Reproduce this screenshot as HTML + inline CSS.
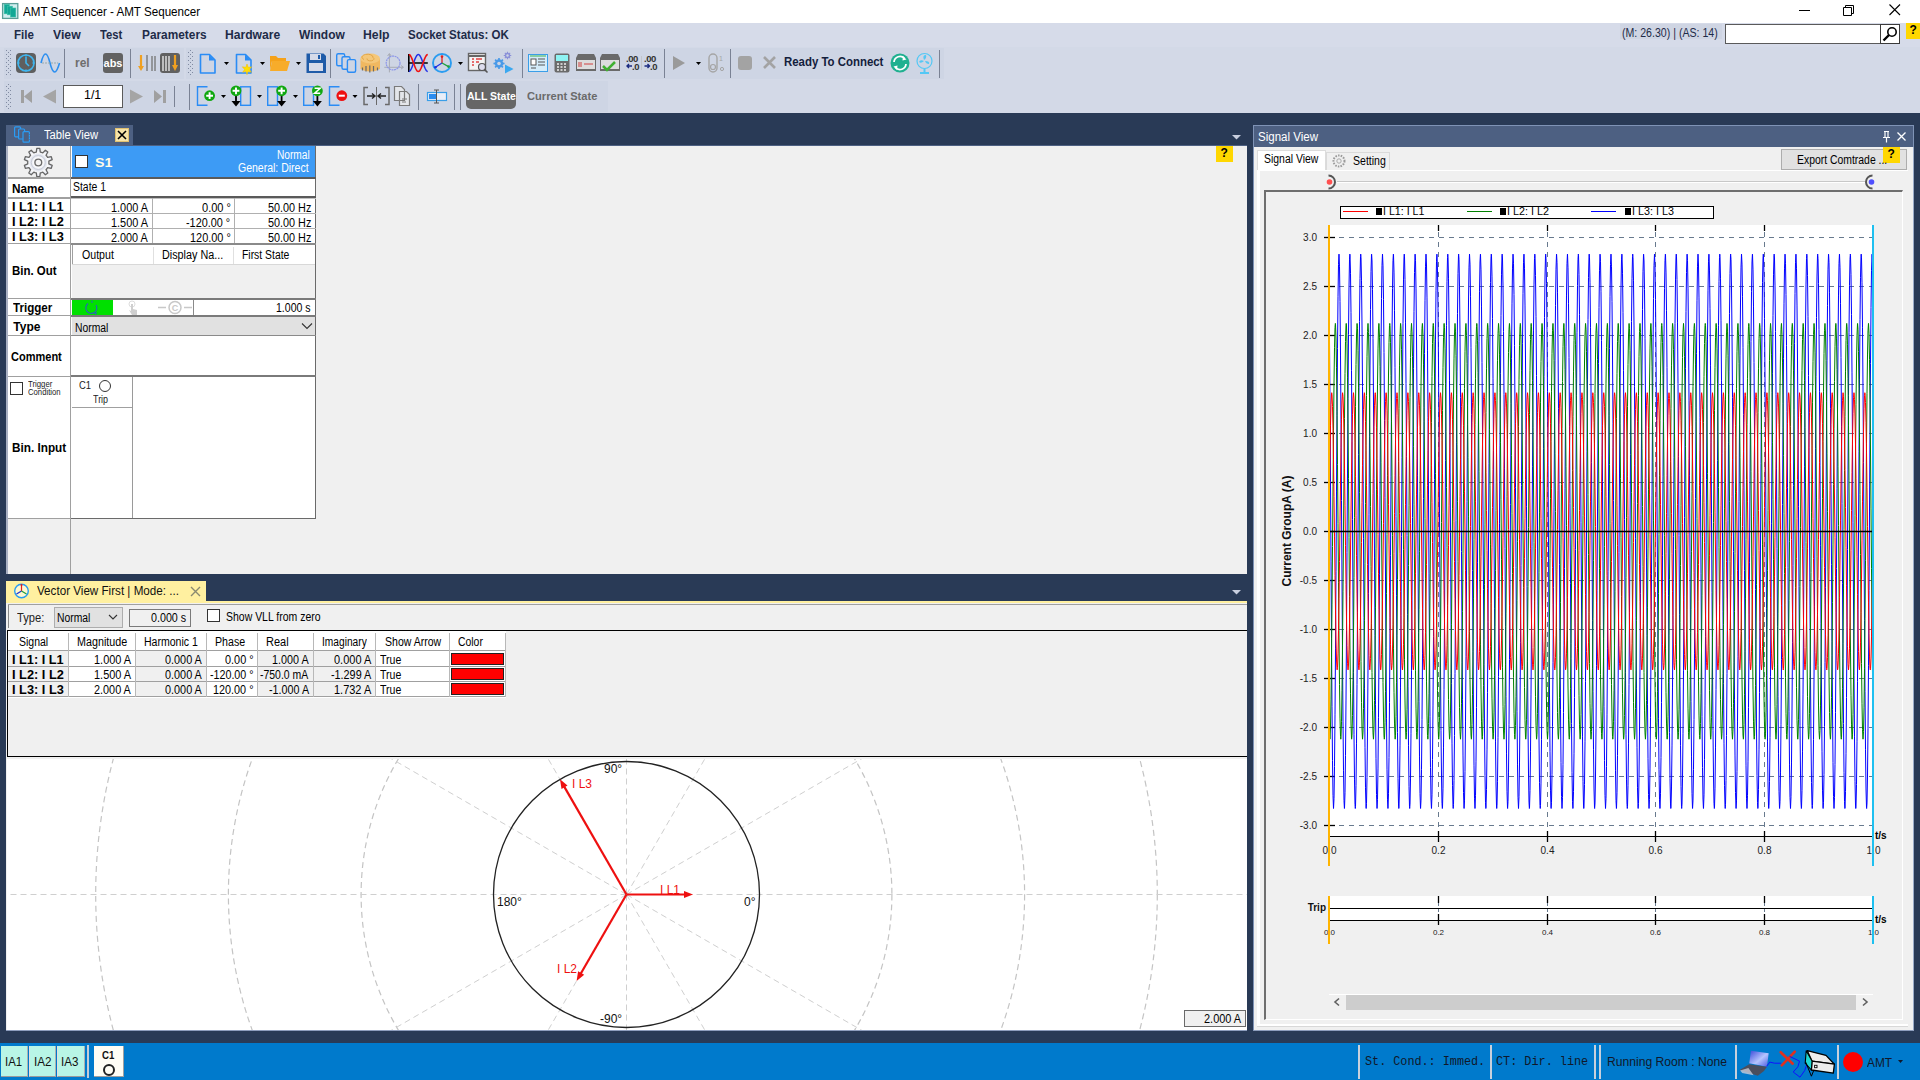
<!DOCTYPE html>
<html><head><meta charset="utf-8"><title>AMT Sequencer</title>
<style>
*{box-sizing:border-box;margin:0;padding:0}
html,body{width:1920px;height:1080px;overflow:hidden;background:#293a56;font-family:"Liberation Sans",sans-serif;font-size:12px;color:#000}
.a{position:absolute}
.t{position:absolute;white-space:nowrap;line-height:1}
.b{font-weight:bold}
svg{position:absolute;overflow:visible}
</style></head><body>
<!-- title bar -->
<div class="a" style="left:0;top:0;width:1920px;height:23px;background:#fff"></div>
<svg style="left:0;top:0" width="22" height="22"><rect x="2.6" y="3.6" width="15.2" height="14.8" fill="#d2eef0" stroke="#5a9e98" stroke-width="1.3"/>
<rect x="4.2" y="4.4" width="5.2" height="9.4" fill="#12a896" stroke="#3cc0a8" stroke-width="0.6"/>
<rect x="7.3" y="6.2" width="5.2" height="8.6" fill="#12a896" stroke="#3cc0a8" stroke-width="0.6"/>
<rect x="10.6" y="8" width="5.2" height="9" fill="#12a896" stroke="#3cc0a8" stroke-width="0.6"/></svg>
<div class="a" style="left:1799px;top:10px;width:11px;height:1px;background:#000"></div>
<svg style="left:1843px;top:5px" width="12" height="12"><path d="M0.5 2.5h8v8h-8z M2.5 2.5v-2h8v8h-2" fill="none" stroke="#000" stroke-width="1"/></svg>
<svg style="left:1889px;top:4px" width="12" height="12"><path d="M0.5 0.5L11 11M11 0.5L0.5 11" stroke="#000" stroke-width="1.1"/></svg>

<!-- menu bar -->
<div class="a" style="left:0;top:23px;width:1920px;height:24px;background:#d6dbe9"></div>
<div class="a" style="left:1620px;top:24px;width:102px;height:15px;background:#cfd5e3"></div>
<div class="a" style="left:1725px;top:24px;width:175px;height:20px;background:#fff;border:1px solid #5a5a5a"></div>
<div class="a" style="left:1880px;top:24px;width:20px;height:20px;border:1px solid #3a3a3a;background:#fff"></div>
<svg style="left:1882px;top:26px" width="16" height="16"><circle cx="10" cy="6" r="4.2" fill="none" stroke="#000" stroke-width="1.6"/><path d="M7 9L1.5 14.5" stroke="#000" stroke-width="2.4"/></svg>
<div class="a" style="left:1906px;top:23px;width:14px;height:16px;background:#ffd700"></div>

<!-- toolbars -->
<div class="a" style="left:0;top:47px;width:1920px;height:66px;background:#d3d9e7"></div>
<div class="a" style="left:4px;top:48px;width:180px;height:31px;background:#ced5e4"></div>
<div class="a" style="left:186px;top:48px;width:758px;height:31px;background:#ced5e4"></div>
<div class="a" style="left:4px;top:81px;width:604px;height:31px;background:#ced5e4"></div>

<!-- toolbar row 1 icons -->
<svg style="left:0;top:0" width="1920" height="112">
<defs>
<pattern id="grip" width="4" height="4" patternUnits="userSpaceOnUse"><rect width="1" height="1" fill="#6d7790"/><rect x="2" y="2" width="1" height="1" fill="#6d7790"/></pattern>
<pattern id="grip2" width="4" height="3" patternUnits="userSpaceOnUse" x="1" y="1"><rect width="1" height="1" fill="#7d879c"/></pattern>
</defs>
<rect x="6" y="50" width="5" height="26" fill="url(#grip)" opacity="0.8"/>
<rect x="188" y="50" width="5" height="26" fill="url(#grip)" opacity="0.8"/>
<rect x="6" y="83" width="5" height="26" fill="url(#grip)" opacity="0.8"/>
<!-- separators -->
<g stroke="#7a8294" stroke-width="1">
<path d="M64.5 49v29M130.5 49v29M330.5 49v29M522.5 49v29M664.5 49v29M730.5 49v29M939.5 50v28"/>
<path d="M174.5 86v21M189.5 84v26M418.5 84v26M454.5 84v26M460.5 84v26"/>
</g>
<!-- clock -->
<rect x="16" y="53" width="20" height="20" rx="4" fill="#5f5f5f"/>
<circle cx="26" cy="63" r="8" fill="none" stroke="#3fb6f0" stroke-width="1.6"/>
<path d="M26 57v6l3 3M26 54.5v2M26 69.5v2M17.5 63h2M32.5 63h2" fill="none" stroke="#3fb6f0" stroke-width="1.6"/>
<!-- sine -->
<path d="M41 63 Q45.5 45 50 63 T59.5 63" fill="none" stroke="#2c8ff0" stroke-width="1.6"/>
<path d="M42 63h16" stroke="#9aa" stroke-width="1" stroke-dasharray="2 1"/>
<!-- rel / abs -->
<text x="75" y="67" font-family="Liberation Sans" font-weight="bold" font-size="12" fill="#6e6e6e">rel</text>
<rect x="103" y="53" width="20" height="20" rx="3" fill="#626262"/>
<text x="113" y="67" text-anchor="middle" font-family="Liberation Sans" font-weight="bold" font-size="11" fill="#fff">abs</text>
<!-- harmonic icons -->
<path d="M141 55v14" stroke="#f0a020" stroke-width="2.2"/><path d="M138 66l3 5 3-5z" fill="#f0a020"/>
<path d="M147 55v16M152 56v15M155 56v15" stroke="#7a7a7a" stroke-width="1.4"/>
<rect x="160" y="53" width="20" height="20" rx="3" fill="#606060"/>
<path d="M163 56v15M166 56v15M169 56v15" stroke="#e6e6e6" stroke-width="1.4"/>
<path d="M175 55v13" stroke="#f0a020" stroke-width="2.2"/><path d="M172 65l3 6 3-6z" fill="#f0a020"/>
<!-- new doc -->
<path d="M200.5 54.5h9l5.5 5.5v13h-14.5z" fill="none" stroke="#2a8cf5" stroke-width="1.6" stroke-linejoin="round"/>
<path d="M209 54.5v6h6" fill="#2a8cf5"/>
<path d="M224 62h5l-2.5 3z" fill="#000"/>
<path d="M236.5 54.5h9l5.5 5.5v13h-14.5z" fill="none" stroke="#2a8cf5" stroke-width="1.6" stroke-linejoin="round"/>
<path d="M245 54.5v6h6" fill="#2a8cf5"/>
<path d="M247 64l1.2 3.3 3.5-.5-2.3 2.6 2 2.9-3.4-1-1 3.4-1-3.4-3.4 1 2-2.9-2.3-2.6 3.5.5z" fill="#ffe100" stroke="#f5b800" stroke-width=".5"/>
<path d="M260 62h5l-2.5 3z" fill="#000"/>
<!-- folder -->
<path d="M270 56h6l2 2h8v3h-14l-2 9z" fill="#f5a21a"/>
<path d="M272 61h18l-3 10h-17z" fill="#f7ac2a"/>
<path d="M296 62h5l-2.5 3z" fill="#000"/>
<!-- save -->
<path d="M306.5 53.5h17l2.5 2.5v17h-19.5z" fill="#1e5ba8"/>
<rect x="310" y="54" width="11" height="6" fill="#d6dbe9"/><rect x="318" y="55" width="2" height="4" fill="#1e5ba8"/>
<rect x="309" y="63" width="14" height="8" fill="#d6dbe9"/>
<!-- copy docs -->
<g fill="#ced5e4" stroke="#2a8cf5" stroke-width="1.4">
<rect x="336.7" y="53.7" width="8" height="12" rx="1.5"/>
<rect x="342" y="56.7" width="8" height="12.5" rx="1.5"/>
<rect x="347.4" y="59.6" width="8.2" height="12.6" rx="1.5"/>
</g>
<!-- tape -->
<path d="M360.5 59v10q9.5 5 19.5 0v-10z" fill="#f0b860"/>
<ellipse cx="370.2" cy="58.5" rx="9.8" ry="5" fill="#f4c77a"/>
<path d="M367 58.5a3.5 2 0 1 0 6 -1a5.5 3 0 1 0 -9 2" fill="none" stroke="#e0a040" stroke-width="0.9"/>
<path d="M362.5 67.5v3M366 66v5.5M369.8 65.5v7M373.5 66v5.5M377.5 67.5v3" stroke="#6a6a6a" stroke-width="1.2"/>
<!-- polar grey -->
<path d="M389.4 72.4V54M387.6 56l1.8-2.5 1.8 2.5M384.3 67.3H403M401 65.5l2.5 1.8-2.5 1.8" fill="none" stroke="#a8acb4" stroke-width="1"/>
<circle cx="393.1" cy="63" r="6.9" fill="none" stroke="#8c96e8" stroke-width="1.2" stroke-dasharray="2 0.6"/>
<!-- sine cross -->
<path d="M408.8 54v18" stroke="#000" stroke-width="1.6"/>
<path d="M409 63h18.8" stroke="#000" stroke-width="1.5"/>
<path d="M408.80 71.50 409.30 71.38 409.80 71.04 410.30 70.48 410.80 69.71 411.30 68.76 411.80 67.65 412.30 66.41 412.80 65.09 413.30 63.70 413.80 62.30 414.30 60.91 414.80 59.59 415.30 58.35 415.80 57.24 416.30 56.29 416.80 55.52 417.30 54.96 417.80 54.62 418.30 54.50 418.80 54.62 419.30 54.96 419.80 55.52 420.30 56.29 420.80 57.24 421.30 58.35 421.80 59.59 422.30 60.91 422.80 62.30 423.30 63.70 423.80 65.09 424.30 66.41 424.80 67.65 425.30 68.76 425.80 69.71 426.30 70.48 426.80 71.04 427.30 71.38 427.80 71.50" fill="none" stroke="#2030e8" stroke-width="1.5"/>
<path d="M408.80 54.50 409.30 54.62 409.80 54.96 410.30 55.52 410.80 56.29 411.30 57.24 411.80 58.35 412.30 59.59 412.80 60.91 413.30 62.30 413.80 63.70 414.30 65.09 414.80 66.41 415.30 67.65 415.80 68.76 416.30 69.71 416.80 70.48 417.30 71.04 417.80 71.38 418.30 71.50 418.80 71.38 419.30 71.04 419.80 70.48 420.30 69.71 420.80 68.76 421.30 67.65 421.80 66.41 422.30 65.09 422.80 63.70 423.30 62.30 423.80 60.91 424.30 59.59 424.80 58.35 425.30 57.24 425.80 56.29 426.30 55.52 426.80 54.96 427.30 54.62 427.80 54.50" fill="none" stroke="#f01010" stroke-width="1.6"/>
<!-- vector -->
<circle cx="442" cy="63" r="9" fill="none" stroke="#2a9cf0" stroke-width="1.9"/>
<path d="M442 63v-6.5" stroke="#e02020" stroke-width="1.3"/><circle cx="442" cy="56.6" r="1.3" fill="#e02020"/>
<path d="M442 63l-6.6 4.3" stroke="#2030e0" stroke-width="1.3"/><circle cx="435.4" cy="67.3" r="1.3" fill="#2030e0"/>
<path d="M442 63l6.5 3.6" stroke="#20a040" stroke-width="1.3"/><circle cx="448.5" cy="66.6" r="1.3" fill="#20a040"/>
<path d="M458 62h5l-2.5 3z" fill="#000"/>
<!-- calendar search -->
<rect x="468.5" y="53.5" width="17" height="17" fill="#f4f4f4" stroke="#666" stroke-width="1.4"/>
<path d="M469 56h16" stroke="#666" stroke-width="2"/>
<path d="M472 59h2M476 59h6M472 62h2M476 62h3M472 65h2" stroke="#e04040" stroke-width="1.3"/>
<circle cx="482" cy="67" r="3.5" fill="#dde" stroke="#555" stroke-width="1.2"/>
<path d="M484.5 69.5l3 3" stroke="#555" stroke-width="1.6"/>
<!-- gears play -->
<path d="M497.39 59.62 L498.08 59.40 L498.21 57.96 L499.79 57.96 L499.92 59.40 L500.61 59.62 L501.25 59.95 L502.36 59.02 L503.48 60.14 L502.55 61.25 L502.88 61.89 L503.10 62.58 L504.54 62.71 L504.54 64.29 L503.10 64.42 L502.88 65.11 L502.55 65.75 L503.48 66.86 L502.36 67.98 L501.25 67.05 L500.61 67.38 L499.92 67.60 L499.79 69.04 L498.21 69.04 L498.08 67.60 L497.39 67.38 L496.75 67.05 L495.64 67.98 L494.52 66.86 L495.45 65.75 L495.12 65.11 L494.90 64.42 L493.46 64.29 L493.46 62.71 L494.90 62.58 L495.12 61.89 L495.45 61.25 L494.52 60.14 L495.64 59.02 L496.75 59.95Z" fill="#4a9ae8"/><circle cx="499" cy="63.5" r="1.8" fill="#ced5e4"/>
<path d="M506.43 52.91 L506.89 52.77 L506.96 51.74 L508.04 51.74 L508.11 52.77 L508.57 52.91 L509.00 53.14 L509.78 52.46 L510.54 53.22 L509.86 54.00 L510.09 54.43 L510.23 54.89 L511.26 54.96 L511.26 56.04 L510.23 56.11 L510.09 56.57 L509.86 57.00 L510.54 57.78 L509.78 58.54 L509.00 57.86 L508.57 58.09 L508.11 58.23 L508.04 59.26 L506.96 59.26 L506.89 58.23 L506.43 58.09 L506.00 57.86 L505.22 58.54 L504.46 57.78 L505.14 57.00 L504.91 56.57 L504.77 56.11 L503.74 56.04 L503.74 54.96 L504.77 54.89 L504.91 54.43 L505.14 54.00 L504.46 53.22 L505.22 52.46 L506.00 53.14Z" fill="#8a90d8"/><circle cx="507.5" cy="55.5" r="1.2" fill="#ced5e4"/>
<path d="M505 64.5v9l8.5-4.5z" fill="#3aa8f0"/>
<!-- form -->
<rect x="528.5" y="54.5" width="19" height="17" fill="#d4ecfa" stroke="#3a9ee8" stroke-width="1"/>
<rect x="531" y="59" width="5" height="6" fill="#fff" stroke="#555" stroke-width="1"/>
<path d="M538 59h7M538 62h7M538 65h7M531 68h5" stroke="#555" stroke-width="1.2"/>
<path d="M530 56h16" stroke="#3ab050" stroke-width="1"/>
<!-- calculator -->
<rect x="554.5" y="53.5" width="15" height="19" rx="2" fill="#6a6a6a"/>
<rect x="556" y="55" width="12" height="6" fill="#8ef3f3"/>
<path d="M557 64h2M560.5 64h2M564 64h2M557 67h2M560.5 67h2M564 67h2M557 70h2M560.5 70h2M564 70h2" stroke="#eee" stroke-width="1.5"/>
<!-- device -->
<path d="M578 54h16l2 4v13h-20v-13z" fill="#6a6a6a"/>
<rect x="577" y="60" width="18" height="9" fill="#ddd"/>
<path d="M579 62v5M581 62v5M584 64h9" stroke="#d04040" stroke-width="1"/>
<path d="M602 54h16l2 4v13h-20v-13z" fill="#6a6a6a"/>
<rect x="601" y="60" width="18" height="9" fill="#ddd"/>
<path d="M603 66l4 4 8-8" fill="none" stroke="#40b030" stroke-width="2.5"/>
<!-- .00 -->
<text x="626" y="62" font-family="Liberation Sans" font-weight="bold" font-size="9.5" fill="#333" letter-spacing="-0.4">.00</text>
<text x="644" y="62" font-family="Liberation Sans" font-weight="bold" font-size="9.5" fill="#333" letter-spacing="-0.4">.00</text>
<text x="632" y="69.5" font-family="Liberation Sans" font-weight="bold" font-size="9.5" fill="#333" letter-spacing="-0.4">.0</text>
<text x="650" y="69.5" font-family="Liberation Sans" font-weight="bold" font-size="9.5" fill="#333" letter-spacing="-0.4">.0</text>
<path d="M627 66h5M629 64l-2 2 2 2M644.5 66h5M647.5 64l2 2-2 2" fill="none" stroke="#1a2a80" stroke-width="1.4"/>
<path d="M641.5 56v14" stroke="#bbb" stroke-width="0.6"/>
<!-- play -->
<path d="M673 56v14l12-7z" fill="#9a9a9a"/>
<path d="M696 62h5l-2.5 3z" fill="#000"/>
<!-- switch -->
<rect x="709" y="54" width="8" height="18" rx="4" fill="none" stroke="#a5a5a5" stroke-width="1.4"/>
<circle cx="713" cy="67" r="2.5" fill="none" stroke="#a5a5a5" stroke-width="1.2"/>
<text x="719" y="61" font-family="Liberation Sans" font-size="7" fill="#a5a5a5">1</text>
<circle cx="722" cy="69" r="1.6" fill="none" stroke="#a5a5a5" stroke-width="1"/>
<!-- stop / x -->
<rect x="738" y="56" width="14" height="14" rx="3" fill="#a3a3a3"/>
<path d="M764 57l11 11M775 57l-11 11" stroke="#a3a3a3" stroke-width="2.6"/>
<!-- refresh -->
<circle cx="900" cy="63" r="9.5" fill="#20b090"/>
<path d="M894 62a6 6 0 0 1 10.5-3.5" fill="none" stroke="#fff" stroke-width="1.8"/>
<path d="M906 64a6 6 0 0 1-10.5 3.5" fill="none" stroke="#fff" stroke-width="1.8"/>
<path d="M903 56l3.5 3.5-4 1z M897 70l-3.5-3.5 4-1z" fill="#fff"/>
<!-- fan -->
<circle cx="924.5" cy="61" r="7.5" fill="none" stroke="#54c8f5" stroke-width="1.2"/>
<path d="M924 60q-2-5 2-5q1 3-2 5zM925 61q5 0 4 3q-3 0-4-3zM924 61q-3 3-5 1q1-3 5-1z" fill="#54c8f5"/>
<path d="M924.5 69v3M920 73h9" stroke="#54c8f5" stroke-width="2"/>
</svg>

<!-- toolbar row 2 -->
<svg style="left:0;top:0" width="1920" height="112">
<path d="M21 90h3v13h-3zM24 96.5l8-6.5v13z" fill="#a0a0a0"/>
<path d="M43 96.5l13-7v14z" fill="#a5a5a5"/>
<path d="M130 89.5l13 7-13 7z" fill="#a5a5a5"/>
<path d="M154 90v13l8-6.5z M163 90h3v13h-3z" fill="#a0a0a0"/>
<!-- state icons -->
<g fill="none" stroke="#2a8cf5" stroke-width="1.4">
<path d="M207.5 86.8h-10v18.5h10"/>
<rect x="240.7" y="86.8" width="9.8" height="18.5"/>
<rect x="267.7" y="86.8" width="9.8" height="18.5"/>
<rect x="303.7" y="86.8" width="9.8" height="18.5"/>
<path d="M339.5 86.8h-10v18.5h10"/>
</g>
<circle cx="209.6" cy="95.7" r="5.4" fill="#10a810"/><path d="M206.2 95.7h6.8M209.6 92.3v6.8" stroke="#fff" stroke-width="1.9"/>
<path d="M221 95h5l-2.5 3z" fill="#000"/>
<path d="M236 96v8.5" stroke="#000" stroke-width="1.8"/><path d="M231.5 101l4.5 5.5 4.5-5.5z" fill="#000"/>
<circle cx="236" cy="90.8" r="5.4" fill="#10a810"/><path d="M232.6 90.8h6.8M236 87.4v6.8" stroke="#fff" stroke-width="1.9"/>
<path d="M257 95h5l-2.5 3z" fill="#000"/>
<path d="M281.6 96v8.5" stroke="#000" stroke-width="1.8"/><path d="M277.1 101l4.5 5.5 4.5-5.5z" fill="#000"/>
<circle cx="281.6" cy="90.8" r="5.4" fill="#10a810"/><path d="M278.2 90.8h6.8M281.6 87.4v6.8" stroke="#fff" stroke-width="1.9"/>
<path d="M293 95h5l-2.5 3z" fill="#000"/>
<path d="M317.4 96v8.5" stroke="#000" stroke-width="1.8"/><path d="M312.9 101l4.5 5.5 4.5-5.5z" fill="#000"/>
<circle cx="317.4" cy="90.8" r="5.4" fill="#10a810"/><path d="M314.6 88.3h5.6l-5.6 5h5.6" fill="none" stroke="#fff" stroke-width="1.5"/>
<circle cx="341.8" cy="95.7" r="5.4" fill="#ee1010"/><path d="M338.8 95.7h6" stroke="#fff" stroke-width="2"/>
<path d="M352.5 95h5l-2.5 3z" fill="#000"/>
<!-- merge -->
<path d="M368 87.5h-4v17h4M385 87.5h4v17h-4" fill="none" stroke="#6a6a6a" stroke-width="1.5"/>
<path d="M376.5 87v18" stroke="#6a6a6a" stroke-width="1"/>
<path d="M367 96h7M372 93.5l3 2.5-3 2.5M386 96h-7M381 93.5l-3 2.5 3 2.5" fill="none" stroke="#222" stroke-width="1.4"/>
<!-- copy docs gray -->
<path d="M394.5 86.5h7l3 3v11h-10z M399.5 91.5h7l3 3v11h-10z" fill="#e4e6ea" stroke="#7a7a7a" stroke-width="1.2"/>
<path d="M402 99h5M402 102h4" stroke="#7a7a7a" stroke-width="1"/>
<!-- rename -->
<rect x="427.5" y="92.5" width="19" height="8" fill="#e8eef8" stroke="#3a9ee8" stroke-width="1.2"/>
<rect x="429" y="94" width="7" height="5" fill="#2a8cf0"/>
<path d="M436.5 90v13M434 90h5M434 103h5" stroke="#555" stroke-width="1"/>
<!-- ALL state -->
<rect x="466" y="83" width="50" height="26" rx="5" fill="#666"/>
</svg>
<div class="a" style="left:63px;top:85px;width:60px;height:23px;background:#fff;border:1px solid #5a5a5a"></div>

<!-- Table View panel -->
<div class="a" style="left:6px;top:125px;width:127px;height:21px;background:#4d6082"></div>
<svg style="left:13px;top:126px" width="20" height="18"><g fill="#4d6082" stroke="#2a9cf5" stroke-width="1.2"><rect x="1.6" y="0.8" width="6" height="10" rx="1"/><rect x="5.6" y="3" width="6" height="10" rx="1"/><rect x="10" y="5.6" width="6.4" height="10.6" rx="1"/></g><path d="M16.4 8v1M16.4 10.5v1M16.4 13v1" stroke="#4d6082" stroke-width="0.6"/></svg>
<div class="a" style="left:115px;top:128px;width:14px;height:14px;background:#f7e4a8;border:1px solid #e0c070"></div>
<svg style="left:117px;top:130px" width="10" height="10"><path d="M1 1L9 9M9 1L1 9" stroke="#000" stroke-width="1.6"/></svg>
<svg style="left:1232px;top:135px" width="10" height="6"><path d="M0 0h9l-4.5 4.5z" fill="#c8cede"/></svg>
<div class="a" style="left:6px;top:145px;width:1241px;height:429px;background:#f0f0f0;border-top:1px solid #4d6082"></div>
<!-- left label column -->
<div class="a" style="left:6px;top:146px;width:2px;height:428px;background:#a9b0c2"></div>
<div class="a" style="left:8px;top:146px;width:63px;height:32px;background:#f0f0f0"></div>
<svg style="left:22px;top:146px" width="32" height="33" viewBox="0 0 32 33">
<defs><radialGradient id="gg" cx="0.5" cy="0.5" r="0.5"><stop offset="0.3" stop-color="#ffffff"/><stop offset="0.55" stop-color="#dfe3ee"/><stop offset="0.7" stop-color="#fafafa"/><stop offset="1" stop-color="#e4e8f2"/></radialGradient></defs>
<ellipse cx="16.3" cy="32" rx="10" ry="1.5" fill="#c8c8c8" opacity="0.6"/>
<path d="M13.02 6.42 L14.31 6.09 L14.79 2.38 L17.81 2.38 L18.29 6.09 L19.58 6.42 L20.81 6.91 L23.37 4.19 L25.82 5.97 L24.03 9.24 L24.88 10.27 L25.59 11.39 L29.26 10.70 L30.20 13.58 L26.82 15.17 L26.90 16.50 L26.82 17.83 L30.20 19.42 L29.26 22.30 L25.59 21.61 L24.88 22.73 L24.03 23.76 L25.82 27.03 L23.37 28.81 L20.81 26.09 L19.58 26.58 L18.29 26.91 L17.81 30.62 L14.79 30.62 L14.31 26.91 L13.02 26.58 L11.79 26.09 L9.23 28.81 L6.78 27.03 L8.57 23.76 L7.72 22.73 L7.01 21.61 L3.34 22.30 L2.40 19.42 L5.78 17.83 L5.70 16.50 L5.78 15.17 L2.40 13.58 L3.34 10.70 L7.01 11.39 L7.72 10.27 L8.57 9.24 L6.78 5.97 L9.23 4.19 L11.79 6.91Z" fill="url(#gg)" stroke="#666" stroke-width="1.3" stroke-linejoin="round"/>
<circle cx="16.3" cy="16.5" r="7" fill="none" stroke="#c8ccd6" stroke-width="1"/>
<circle cx="16.3" cy="16.5" r="3.4" fill="#f4f4f4" stroke="#6a6a6a" stroke-width="1.4"/>
</svg>
<div class="a" style="left:8px;top:178px;width:63px;height:340px;background:#fff"></div>
<div class="a" style="left:8px;top:518px;width:63px;height:56px;background:#f0f0f0"></div>
<div class="a" style="left:70px;top:146px;width:1px;height:428px;background:#a0a0a0"></div>
<!-- label row lines -->
<div class="a" style="left:8px;top:177px;width:62px;height:2px;background:#a0a0a0"></div>
<div class="a" style="left:8px;top:197px;width:62px;height:2px;background:#a0a0a0"></div>
<div class="a" style="left:8px;top:213px;width:62px;height:1px;background:#a0a0a0"></div>
<div class="a" style="left:8px;top:228px;width:62px;height:1px;background:#a0a0a0"></div>
<div class="a" style="left:8px;top:243px;width:62px;height:1px;background:#a0a0a0"></div>
<div class="a" style="left:8px;top:298px;width:62px;height:1px;background:#a0a0a0"></div>
<div class="a" style="left:8px;top:315px;width:62px;height:1px;background:#a0a0a0"></div>
<div class="a" style="left:8px;top:335px;width:62px;height:1px;background:#a0a0a0"></div>
<div class="a" style="left:8px;top:376px;width:62px;height:1px;background:#a0a0a0"></div>
<div class="a" style="left:8px;top:518px;width:62px;height:1px;background:#a0a0a0"></div>
<div class="a" style="left:10px;top:382px;width:13px;height:13px;background:#fff;border:1px solid #333"></div>

<!-- value column -->
<div class="a" style="left:71px;top:146px;width:245px;height:373px;background:#fff;border-right:1px solid #6a6a6a;border-bottom:1px solid #6a6a6a"></div>
<div class="a" style="left:72px;top:146px;width:243px;height:31px;background:#3d9bf5"></div>
<div class="a" style="left:75px;top:155px;width:13px;height:13px;background:#fff;border:1px solid #333"></div>
<div class="a" style="left:71px;top:177px;width:245px;height:2px;background:#5a5a5a"></div>
<div class="a" style="left:71px;top:196px;width:245px;height:2px;background:#5a5a5a"></div>
<!-- L rows -->
<div class="a" style="left:71px;top:198px;width:245px;height:1px;background:#c0c0c0"></div>
<div class="a" style="left:71px;top:213px;width:245px;height:1px;background:#b0b0b0"></div>
<div class="a" style="left:71px;top:228px;width:245px;height:1px;background:#b0b0b0"></div>
<div class="a" style="left:71px;top:243px;width:245px;height:2px;background:#8a8a8a"></div>
<div class="a" style="left:152px;top:198px;width:1px;height:45px;background:#b0b0b0"></div>
<div class="a" style="left:234px;top:198px;width:1px;height:45px;background:#b0b0b0"></div>
<!-- bin out -->
<div class="a" style="left:72px;top:245px;width:243px;height:19px;background:#fff;border-left:1px solid #a0a0a0"></div>
<div class="a" style="left:72px;top:264px;width:243px;height:35px;background:#f0f0f0;border-top:1px solid #d8d8d8"></div>
<div class="a" style="left:153px;top:247px;width:1px;height:17px;background:#e0e0e0"></div>
<div class="a" style="left:233px;top:247px;width:1px;height:17px;background:#e0e0e0"></div>
<!-- trigger -->
<div class="a" style="left:71px;top:298px;width:245px;height:2px;background:#7a7a7a"></div>
<div class="a" style="left:72px;top:300px;width:41px;height:16px;background:#00e000"></div>
<svg style="left:84px;top:299px" width="16" height="17"><path d="M12 6a5.5 5.5 0 1 1-8-1.5" fill="none" stroke="#2a60c0" stroke-width="1.1"/><path d="M8 1.5v2.5" stroke="#2a60c0" stroke-width="1"/><path d="M10 14l3-1-1 3z" fill="#2a60c0"/></svg>
<svg style="left:126px;top:299px" width="14" height="17"><circle cx="6" cy="5" r="3" fill="none" stroke="#ddd" stroke-width="1"/><path d="M5 5v7l-2-1 3 5h5v-5l-4-1v-5z" fill="#cfcfcf"/></svg>
<svg style="left:157px;top:300px" width="36" height="15"><path d="M1 7.5h8M27 7.5h8" stroke="#c8c8c8" stroke-width="1.5"/><circle cx="18" cy="7.5" r="6" fill="none" stroke="#c8c8c8" stroke-width="1.5"/><text x="18" y="11" text-anchor="middle" font-family="Liberation Sans" font-weight="bold" font-size="9" fill="#c8c8c8">C</text></svg>
<div class="a" style="left:193px;top:300px;width:1px;height:16px;background:#8a8a8a"></div>
<!-- type -->
<div class="a" style="left:71px;top:315px;width:245px;height:2px;background:#7a7a7a"></div>
<div class="a" style="left:72px;top:317px;width:243px;height:18px;background:#e1e1e1"></div>
<svg style="left:301px;top:322px" width="12" height="8"><path d="M1 1.5l5 5 5-5" fill="none" stroke="#333" stroke-width="1.1"/></svg>
<div class="a" style="left:71px;top:335px;width:245px;height:1px;background:#8a8a8a"></div>
<div class="a" style="left:71px;top:375px;width:245px;height:2px;background:#7a7a7a"></div>
<!-- bin input -->
<div class="a" style="left:132px;top:377px;width:1px;height:141px;background:#9a9a9a"></div>
<div class="a" style="left:72px;top:407px;width:60px;height:1px;background:#a0a0a0"></div>
<div class="a" style="left:99px;top:380px;width:12px;height:12px;border:1.5px solid #333;border-radius:50%"></div>
<!-- help -->
<div class="a" style="left:1216px;top:146px;width:17px;height:16px;background:#ffd700"></div>

<!-- Vector View panel -->
<div class="a" style="left:6px;top:581px;width:200px;height:21px;background:#fff0a0"></div>
<svg style="left:13px;top:582px" width="18" height="18"><circle cx="8.5" cy="9" r="6.8" fill="#fff8d0" stroke="#2a9cf0" stroke-width="1.4"/><path d="M8.5 9v-6" stroke="#e02020" stroke-width="1.2"/><path d="M8.5 9l-5 3" stroke="#2030d0" stroke-width="1.2"/><path d="M8.5 9l5 3" stroke="#20a040" stroke-width="1.2"/><circle cx="8.5" cy="3" r="1" fill="#e02020"/></svg>
<svg style="left:190px;top:586px" width="11" height="11"><path d="M1 1L10 10M10 1L1 10" stroke="#8a8a70" stroke-width="1.4"/></svg>
<svg style="left:1232px;top:590px" width="10" height="6"><path d="M0 0h9l-4.5 4.5z" fill="#c8cede"/></svg>
<div class="a" style="left:6px;top:601px;width:1241px;height:2px;background:#fff0a0"></div>
<div class="a" style="left:6px;top:603px;width:1241px;height:428px;background:#f0f0f0;border-bottom:1px solid #8d9dbd"></div>
<div class="a" style="left:8px;top:604px;width:1px;height:24px;background:#8a8a8a"></div>
<div class="a" style="left:8px;top:604px;width:1239px;height:1px;background:#a0a0a0"></div>
<div class="a" style="left:54px;top:607px;width:69px;height:21px;background:#e1e1e1;border:1px solid #adadad"></div>
<svg style="left:108px;top:614px" width="10" height="7"><path d="M1 1l4 4 4-4" fill="none" stroke="#333" stroke-width="1.1"/></svg>
<div class="a" style="left:129px;top:609px;width:62px;height:18px;background:#f0f0f0;border:1px solid #7a7a7a"></div>
<div class="a" style="left:207px;top:609px;width:13px;height:13px;background:#fff;border:1px solid #333"></div>
<!-- grid -->
<div class="a" style="left:7px;top:630px;width:1240px;height:127px;background:#f0f0f0;border-top:1px solid #000;border-left:1px solid #000;border-bottom:1px solid #000"></div>
<div class="a" style="left:8px;top:631px;width:498px;height:67px;background:#fff"></div>
<div class="a" style="left:8px;top:651px;width:60px;height:46px;background:#f0f0f0"></div>
<div class="a" style="left:136px;top:651px;width:70px;height:46px;background:#f0f0f0"></div>
<div class="a" style="left:258px;top:651px;width:117px;height:46px;background:#f0f0f0"></div>
<div class="a" style="left:8px;top:650px;width:498px;height:1px;background:#a0a0a0"></div>
<div class="a" style="left:8px;top:666px;width:498px;height:1px;background:#a0a0a0"></div>
<div class="a" style="left:8px;top:681px;width:498px;height:1px;background:#a0a0a0"></div>
<div class="a" style="left:8px;top:696px;width:498px;height:1px;background:#a0a0a0"></div>
<div class="a" style="left:68px;top:633px;width:1px;height:64px;background:#b8b8b8"></div>
<div class="a" style="left:135px;top:633px;width:1px;height:64px;background:#b8b8b8"></div>
<div class="a" style="left:206px;top:633px;width:1px;height:64px;background:#b8b8b8"></div>
<div class="a" style="left:257px;top:633px;width:1px;height:64px;background:#b8b8b8"></div>
<div class="a" style="left:313px;top:633px;width:1px;height:64px;background:#b8b8b8"></div>
<div class="a" style="left:375px;top:633px;width:1px;height:64px;background:#b8b8b8"></div>
<div class="a" style="left:449px;top:633px;width:1px;height:64px;background:#b8b8b8"></div>
<div class="a" style="left:505px;top:633px;width:1px;height:64px;background:#b8b8b8"></div>
<div class="a" style="left:451px;top:653px;width:53px;height:12px;background:#f00;border:1px solid #222"></div>
<div class="a" style="left:451px;top:668px;width:53px;height:12px;background:#f00;border:1px solid #222"></div>
<div class="a" style="left:451px;top:683px;width:53px;height:12px;background:#f00;border:1px solid #222"></div>
<!-- polar area -->
<div class="a" style="left:7px;top:759px;width:1240px;height:271px;background:#fff"></div>

<!-- Signal View panel -->
<div class="a" style="left:1253px;top:125px;width:661px;height:22px;background:#4d6082;border-top:1px solid #7f93b6;border-left:1px solid #7f93b6;border-right:1px solid #7f93b6"></div>
<svg style="left:1880px;top:130px" width="30" height="14"><path d="M4 1.5h5M5 1.5v6M8 1.5v6M3 7.5h7M6.5 7.5v5" fill="none" stroke="#fff" stroke-width="1.2"/><path d="M17.5 2.5l8 8M25.5 2.5l-8 8" stroke="#fff" stroke-width="1.3"/></svg>
<div class="a" style="left:1253px;top:147px;width:661px;height:884px;background:#f0f0f0;border-left:1px solid #7f93b6;border-right:1px solid #9aabc8;border-bottom:1px solid #8d9dbd"></div>
<!-- tabs -->
<div class="a" style="left:1257px;top:150px;width:69px;height:21px;background:#fff;border:1px solid #dcdcdc;border-bottom:none"></div>
<div class="a" style="left:1326px;top:152px;width:64px;height:18px;background:#f0f0f0;border:1px solid #dadada;border-bottom:none"></div>
<svg style="left:1331px;top:153px" width="16" height="16"><circle cx="8" cy="8" r="5.5" fill="none" stroke="#9a9a9a" stroke-width="2" stroke-dasharray="1.5 1.2"/><circle cx="8" cy="8" r="2.2" fill="none" stroke="#aaa" stroke-width="1"/></svg>
<div class="a" style="left:1781px;top:149px;width:126px;height:21px;background:#e1e1e1;border:1px solid #adadad"></div>
<div class="a" style="left:1883px;top:147px;width:17px;height:16px;background:#ffd700"></div>
<!-- tab page -->
<div class="a" style="left:1257px;top:170px;width:651px;height:856px;background:#fff"></div>
<div class="a" style="left:1257px;top:1026px;width:651px;height:1px;background:#d8d8d8"></div>
<div class="a" style="left:1260px;top:171px;width:648px;height:853px;background:#f0f0f0"></div>
<!-- slider -->
<div class="a" style="left:1337px;top:181px;width:528px;height:1px;background:#c8c8c8"></div>
<div class="a" style="left:1337px;top:182px;width:528px;height:1px;background:#fff"></div>
<svg style="left:1320px;top:172px" width="20" height="20"><path d="M8.5 3.5a6 6 0 0 1 0 13" fill="none" stroke="#555" stroke-width="2"/><circle cx="9.5" cy="10" r="2.8" fill="#ff5050"/></svg>
<svg style="left:1860px;top:172px" width="20" height="20"><path d="M12.5 3.5a6 6 0 0 0 0 13" fill="none" stroke="#555" stroke-width="2"/><circle cx="11.5" cy="10" r="2.8" fill="#5050ff"/></svg>
<!-- chart frame -->
<div class="a" style="left:1264px;top:190px;width:639px;height:830px;background:#f0f0f0;border-top:2px solid #6e6e6e;border-left:2px solid #6e6e6e;border-right:1px solid #fff;border-bottom:1px solid #fff"></div>
<!-- legend -->
<div class="a" style="left:1340px;top:206px;width:374px;height:13px;background:#fff;border:1px solid #000"></div>
<div class="a" style="left:1343px;top:211px;width:25px;height:1px;background:#ff0000"></div>
<div class="a" style="left:1467px;top:211px;width:25px;height:1px;background:#008000"></div>
<div class="a" style="left:1591px;top:211px;width:25px;height:1px;background:#0000ff"></div>
<div class="a" style="left:1376px;top:208px;width:6px;height:7px;background:#000"></div>
<div class="a" style="left:1500px;top:208px;width:6px;height:7px;background:#000"></div>
<div class="a" style="left:1625px;top:208px;width:6px;height:7px;background:#000"></div>
<!-- scrollbar -->
<div class="a" style="left:1329px;top:994px;width:544px;height:17px;background:#f0f0f0;border-top:1px solid #fff"></div>
<div class="a" style="left:1346px;top:995px;width:510px;height:15px;background:#cdcdcd"></div>
<svg style="left:1332px;top:997px" width="10" height="10"><path d="M7 1.5L3 5l4 3.5" fill="none" stroke="#606060" stroke-width="1.6"/></svg>
<svg style="left:1860px;top:997px" width="10" height="10"><path d="M3 1.5L7 5 3 8.5" fill="none" stroke="#606060" stroke-width="1.6"/></svg>

<!-- status bar -->
<div class="a" style="left:0;top:1043px;width:1920px;height:37px;background:#007acc"></div>

<!-- status bar content -->
<div class="a" style="left:1px;top:1046px;width:27px;height:31px;background:#b8f5e6;border-right:1px solid #b0b0b0;border-bottom:1px solid #9a9a9a"></div>
<div class="a" style="left:29px;top:1046px;width:27px;height:31px;background:#b8f5e6;border-right:1px solid #b0b0b0;border-bottom:1px solid #9a9a9a;border-left:1px solid #e0e0e0"></div>
<div class="a" style="left:57px;top:1046px;width:28px;height:31px;background:#b8f5e6;border-right:1px solid #b0b0b0;border-bottom:1px solid #9a9a9a;border-left:1px solid #e0e0e0"></div>
<div class="a" style="left:87px;top:1045px;width:2px;height:33px;background:#c4ccd8"></div>
<div class="a" style="left:94px;top:1046px;width:30px;height:31px;background:#fffdf4;border-right:1px solid #a0a0a0;border-bottom:1px solid #a0a0a0"></div>
<div class="a" style="left:103px;top:1064px;width:12px;height:12px;border:2px solid #222;border-radius:50%"></div>
<div class="a" style="left:1358px;top:1045px;width:2px;height:34px;background:#c8d0dc"></div>
<div class="a" style="left:1490px;top:1045px;width:2px;height:34px;background:#c8d0dc"></div>
<div class="a" style="left:1594px;top:1045px;width:2px;height:34px;background:#c8d0dc"></div>
<div class="a" style="left:1599px;top:1045px;width:2px;height:34px;background:#c8d0dc"></div>
<div class="a" style="left:1735px;top:1045px;width:2px;height:34px;background:#c8d0dc"></div>
<div class="a" style="left:1837px;top:1045px;width:2px;height:34px;background:#c8d0dc"></div>
<svg style="left:1738px;top:1046px" width="100" height="34">
<defs><linearGradient id="lg1" x1="0" y1="0" x2="1" y2="1"><stop offset="0" stop-color="#3a48d8"/><stop offset="0.55" stop-color="#b4c4ff"/><stop offset="1" stop-color="#4a5ae0"/></linearGradient></defs>
<path d="M13.0 4.7 30.7 7.3 28.9 20.8 11.2 17.2 Z" fill="url(#lg1)"/>
<path d="M1.6 24.0 11.2 18.2 28.9 20.8 26.0 25.0 19.8 29.7 Z" fill="#4a4e5e"/>
<path d="M2.1 24.5 10.4 21.9 15.6 29.2 4.2 27.1 Z" fill="#c8ccd8" opacity="0.8"/>
<path d="M28.6 20.3 31.8 16.1 36.5 17.2 43.2 17.2" fill="none" stroke="#1010ff" stroke-width="1"/>
<path d="M42.7 6.2 54.7 17.7 M56.8 5.7 43.8 19.3" stroke="#e03020" stroke-width="2.6" stroke-linecap="round"/>
<path d="M51.6 10.4 61.5 15.1 59.9 20.8 55.2 26.0 62.0 31.2 66.7 24.5 69.8 15.6" fill="none" stroke="#1010ff" stroke-width="1"/>
<path d="M69.3 4.7 88.0 9.4 96.4 18.2 74.0 15.1 Z" fill="#ececec" stroke="#000" stroke-width="1.3" stroke-linejoin="round"/>
<path d="M74.0 15.1 96.4 18.2 95.3 27.1 73.4 24.0 Z" fill="#ececec" stroke="#000" stroke-width="1.3" stroke-linejoin="round"/>
<path d="M68.2 4.7 74.0 15.1 73.4 24.0 67.2 17.2 Z" fill="#20d8d0" stroke="#000" stroke-width="1.1" stroke-linejoin="round"/>
<path d="M67.7 16.1 73.4 30.2 75.5 25.0" fill="none" stroke="#000" stroke-width="1"/>
<rect x="76.6" y="19.3" width="2.4" height="2.4" fill="#fff" stroke="#000" stroke-width="0.9"/>
</svg>
<div class="a" style="left:1843px;top:1052px;width:20px;height:20px;background:#ff0000;border-radius:50%"></div>
<svg style="left:1898px;top:1060px" width="6" height="4"><path d="M0 0h5l-2.5 3z" fill="#10182a"/></svg>

<svg style="left:7px;top:759px" width="1240" height="271" viewBox="7 759 1240 271">
<defs><clipPath id="pc"><rect x="7" y="759" width="1240" height="271"/></clipPath></defs>
<g clip-path="url(#pc)">
<circle cx="626.5" cy="894.5" r="265.4" fill="none" stroke="#c4c4c4" stroke-width="1.2" stroke-dasharray="6 4"/>
<circle cx="626.5" cy="894.5" r="398.1" fill="none" stroke="#c4c4c4" stroke-width="1.2" stroke-dasharray="6 4"/>
<circle cx="626.5" cy="894.5" r="530.8" fill="none" stroke="#c4c4c4" stroke-width="1.2" stroke-dasharray="6 4"/>
<path d="M626.5 894.5 L1626.5 894.5" stroke="#cfcfcf" stroke-width="1" stroke-dasharray="6 4"/>
<path d="M626.5 894.5 L1492.5 394.5" stroke="#cfcfcf" stroke-width="1" stroke-dasharray="6 4"/>
<path d="M626.5 894.5 L1126.5 28.5" stroke="#cfcfcf" stroke-width="1" stroke-dasharray="6 4"/>
<path d="M626.5 894.5 L626.5 -105.5" stroke="#cfcfcf" stroke-width="1" stroke-dasharray="6 4"/>
<path d="M626.5 894.5 L126.5 28.5" stroke="#cfcfcf" stroke-width="1" stroke-dasharray="6 4"/>
<path d="M626.5 894.5 L-239.5 394.5" stroke="#cfcfcf" stroke-width="1" stroke-dasharray="6 4"/>
<path d="M626.5 894.5 L-373.5 894.5" stroke="#cfcfcf" stroke-width="1" stroke-dasharray="6 4"/>
<path d="M626.5 894.5 L-239.5 1394.5" stroke="#cfcfcf" stroke-width="1" stroke-dasharray="6 4"/>
<path d="M626.5 894.5 L126.5 1760.5" stroke="#cfcfcf" stroke-width="1" stroke-dasharray="6 4"/>
<path d="M626.5 894.5 L626.5 1894.5" stroke="#cfcfcf" stroke-width="1" stroke-dasharray="6 4"/>
<path d="M626.5 894.5 L1126.5 1760.5" stroke="#cfcfcf" stroke-width="1" stroke-dasharray="6 4"/>
<path d="M626.5 894.5 L1492.5 1394.5" stroke="#cfcfcf" stroke-width="1" stroke-dasharray="6 4"/>
<circle cx="626.5" cy="894.5" r="133.0" fill="none" stroke="#222" stroke-width="1.3"/>
<path d="M626.5 894.5 L686.0 894.5" stroke="#ee1010" stroke-width="2.2"/><path d="M693.0 894.5 L684.0 898.0 L684.0 891.0 Z" fill="#ee1010"/>
<path d="M626.5 894.5 L580.1 974.8" stroke="#ee1010" stroke-width="2.2"/><path d="M576.6 980.9 L578.1 971.3 L584.2 974.8 Z" fill="#ee1010"/>
<path d="M626.5 894.5 L563.5 785.4" stroke="#ee1010" stroke-width="2.2"/><path d="M560.0 779.3 L567.5 785.4 L561.5 788.9 Z" fill="#ee1010"/>
<text x="660" y="894" font-family="Liberation Sans" font-size="12" fill="#ee1010">I L1</text>
<text x="557" y="973" font-family="Liberation Sans" font-size="12" fill="#ee1010">I L2</text>
<text x="572" y="788" font-family="Liberation Sans" font-size="12" fill="#ee1010">I L3</text>
<text x="604" y="773" font-family="Liberation Sans" font-size="12" fill="#111">90°</text>
<text x="497" y="906" font-family="Liberation Sans" font-size="12" fill="#111">180°</text>
<text x="744" y="906" font-family="Liberation Sans" font-size="12" fill="#111">0°</text>
<text x="600" y="1023" font-family="Liberation Sans" font-size="12" fill="#111">-90°</text>
</g></svg>
<div class="a" style="left:1184px;top:1010px;width:62px;height:17px;background:#f0f0f0;border:1px solid #6a6a6a"></div>
<svg style="left:0;top:0" width="1920" height="1080">
<rect x="1329" y="225" width="544" height="611.5" fill="#fff"/>
<path d="M1339 825.5H1873" stroke="#687a8e" stroke-width="1" stroke-dasharray="5 5"/>
<path d="M1324 825.5H1335" stroke="#000" stroke-width="1.3"/>
<text x="1317" y="829.0" text-anchor="end" font-family="Liberation Sans" font-size="10" fill="#222">-3.0</text>
<path d="M1339 776.5H1873" stroke="#687a8e" stroke-width="1" stroke-dasharray="5 5"/>
<path d="M1324 776.5H1335" stroke="#000" stroke-width="1.3"/>
<text x="1317" y="780.0" text-anchor="end" font-family="Liberation Sans" font-size="10" fill="#222">-2.5</text>
<path d="M1339 727.5H1873" stroke="#687a8e" stroke-width="1" stroke-dasharray="5 5"/>
<path d="M1324 727.5H1335" stroke="#000" stroke-width="1.3"/>
<text x="1317" y="731.0" text-anchor="end" font-family="Liberation Sans" font-size="10" fill="#222">-2.0</text>
<path d="M1339 678.5H1873" stroke="#687a8e" stroke-width="1" stroke-dasharray="5 5"/>
<path d="M1324 678.5H1335" stroke="#000" stroke-width="1.3"/>
<text x="1317" y="682.0" text-anchor="end" font-family="Liberation Sans" font-size="10" fill="#222">-1.5</text>
<path d="M1339 629.5H1873" stroke="#687a8e" stroke-width="1" stroke-dasharray="5 5"/>
<path d="M1324 629.5H1335" stroke="#000" stroke-width="1.3"/>
<text x="1317" y="633.0" text-anchor="end" font-family="Liberation Sans" font-size="10" fill="#222">-1.0</text>
<path d="M1339 580.5H1873" stroke="#687a8e" stroke-width="1" stroke-dasharray="5 5"/>
<path d="M1324 580.5H1335" stroke="#000" stroke-width="1.3"/>
<text x="1317" y="584.0" text-anchor="end" font-family="Liberation Sans" font-size="10" fill="#222">-0.5</text>
<path d="M1324 531.5H1335" stroke="#000" stroke-width="1.3"/>
<text x="1317" y="535.0" text-anchor="end" font-family="Liberation Sans" font-size="10" fill="#222">0.0</text>
<path d="M1339 482.5H1873" stroke="#687a8e" stroke-width="1" stroke-dasharray="5 5"/>
<path d="M1324 482.5H1335" stroke="#000" stroke-width="1.3"/>
<text x="1317" y="486.0" text-anchor="end" font-family="Liberation Sans" font-size="10" fill="#222">0.5</text>
<path d="M1339 433.5H1873" stroke="#687a8e" stroke-width="1" stroke-dasharray="5 5"/>
<path d="M1324 433.5H1335" stroke="#000" stroke-width="1.3"/>
<text x="1317" y="437.0" text-anchor="end" font-family="Liberation Sans" font-size="10" fill="#222">1.0</text>
<path d="M1339 384.5H1873" stroke="#687a8e" stroke-width="1" stroke-dasharray="5 5"/>
<path d="M1324 384.5H1335" stroke="#000" stroke-width="1.3"/>
<text x="1317" y="388.0" text-anchor="end" font-family="Liberation Sans" font-size="10" fill="#222">1.5</text>
<path d="M1339 335.5H1873" stroke="#687a8e" stroke-width="1" stroke-dasharray="5 5"/>
<path d="M1324 335.5H1335" stroke="#000" stroke-width="1.3"/>
<text x="1317" y="339.0" text-anchor="end" font-family="Liberation Sans" font-size="10" fill="#222">2.0</text>
<path d="M1339 286.5H1873" stroke="#687a8e" stroke-width="1" stroke-dasharray="5 5"/>
<path d="M1324 286.5H1335" stroke="#000" stroke-width="1.3"/>
<text x="1317" y="290.0" text-anchor="end" font-family="Liberation Sans" font-size="10" fill="#222">2.5</text>
<path d="M1339 237.5H1873" stroke="#687a8e" stroke-width="1" stroke-dasharray="5 5"/>
<path d="M1324 237.5H1335" stroke="#000" stroke-width="1.3"/>
<text x="1317" y="241.0" text-anchor="end" font-family="Liberation Sans" font-size="10" fill="#222">3.0</text>
<path d="M1438.5 225V231" stroke="#000" stroke-width="1.3"/>
<path d="M1438.5 232V836" stroke="#687a8e" stroke-width="1" stroke-dasharray="5 5"/>
<path d="M1547.5 225V231" stroke="#000" stroke-width="1.3"/>
<path d="M1547.5 232V836" stroke="#687a8e" stroke-width="1" stroke-dasharray="5 5"/>
<path d="M1655.5 225V231" stroke="#000" stroke-width="1.3"/>
<path d="M1655.5 232V836" stroke="#687a8e" stroke-width="1" stroke-dasharray="5 5"/>
<path d="M1764.5 225V231" stroke="#000" stroke-width="1.3"/>
<path d="M1764.5 232V836" stroke="#687a8e" stroke-width="1" stroke-dasharray="5 5"/>
<path d="M1329.00 291.25 1329.50 340.65 1330.00 405.84 1330.50 481.42 1331.00 561.12 1331.50 638.36 1332.00 706.73 1332.50 760.58 1333.00 795.44 1333.50 808.43 1333.53 808.49 1334.00 798.48 1334.50 766.40 1335.00 714.86 1335.50 648.12 1336.00 571.71 1336.50 491.95 1337.00 415.45 1337.50 348.54 1338.00 296.76 1338.50 264.41 1338.97 254.11 1339.00 254.15 1339.50 266.84 1340.00 301.42 1340.50 355.04 1341.00 423.26 1341.50 500.42 1342.00 580.13 1342.50 655.81 1343.00 721.17 1343.50 770.81 1344.00 800.63 1344.41 808.49 1344.50 808.14 1345.00 792.73 1345.50 755.67 1346.00 700.04 1346.50 630.44 1347.00 552.62 1347.50 473.04 1348.00 398.29 1348.50 334.55 1349.00 287.10 1349.50 259.86 1349.85 254.11 1350.00 255.11 1350.50 273.22 1351.00 312.70 1351.50 370.28 1352.00 441.19 1352.50 519.56 1353.00 598.91 1353.50 672.66 1354.00 734.70 1354.50 779.90 1355.00 804.52 1355.29 808.49 1355.50 806.51 1356.00 785.72 1356.50 743.87 1357.00 684.41 1357.50 612.27 1358.00 533.43 1358.50 454.42 1359.00 381.77 1359.50 321.50 1360.00 278.60 1360.50 256.63 1360.73 254.11 1361.00 257.39 1361.50 280.84 1362.00 325.03 1362.50 386.29 1363.00 459.56 1363.50 538.77 1364.00 617.36 1364.50 688.83 1365.00 747.25 1365.50 787.79 1366.00 807.10 1366.17 808.49 1366.50 803.57 1367.00 777.49 1367.50 731.04 1368.00 668.04 1368.50 593.72 1369.00 514.24 1369.50 436.16 1370.00 365.97 1370.50 309.46 1371.00 271.32 1371.50 254.71 1371.61 254.11 1372.00 261.00 1372.50 289.67 1373.00 338.34 1373.50 402.99 1374.00 478.27 1374.50 557.94 1375.00 635.40 1375.50 704.24 1376.00 758.76 1376.50 794.45 1377.00 808.35 1377.05 808.49 1377.50 799.32 1378.00 768.08 1378.50 717.25 1379.00 651.02 1379.50 574.87 1380.00 495.12 1380.50 418.36 1381.00 350.96 1381.50 298.48 1382.00 265.29 1382.49 254.11 1382.50 254.12 1383.00 265.90 1383.50 299.65 1384.00 352.58 1384.50 420.32 1385.00 497.24 1385.50 576.98 1386.00 652.94 1386.50 718.83 1387.00 769.19 1387.50 799.85 1387.93 808.49 1388.00 808.28 1388.50 793.78 1389.00 757.54 1389.50 702.57 1390.00 633.42 1390.50 555.81 1391.00 476.18 1391.50 401.11 1392.00 336.81 1392.50 288.63 1393.00 260.53 1393.37 254.11 1393.50 254.86 1394.00 272.07 1394.50 310.75 1395.00 367.68 1395.50 438.17 1396.00 516.37 1396.50 595.80 1397.00 669.89 1397.50 732.51 1398.00 778.47 1398.50 803.96 1398.81 808.49 1399.00 806.88 1399.50 786.98 1400.00 745.91 1400.50 687.07 1401.00 615.33 1401.50 536.64 1402.00 457.50 1402.50 384.47 1403.00 323.61 1403.50 279.93 1404.00 257.08 1404.25 254.11 1404.50 256.92 1405.00 279.49 1405.50 322.90 1406.00 383.57 1406.50 456.47 1407.00 535.57 1407.50 614.31 1408.00 686.18 1408.50 745.23 1409.00 786.56 1409.50 806.76 1409.69 808.49 1410.00 804.15 1410.50 778.95 1411.00 733.24 1411.50 670.82 1412.00 596.84 1412.50 517.43 1413.00 439.18 1413.50 368.55 1414.00 311.39 1414.50 272.45 1415.00 254.94 1415.13 254.11 1415.50 260.31 1416.00 288.11 1416.50 336.06 1417.00 400.17 1417.50 475.13 1418.00 554.75 1418.50 632.43 1419.00 701.73 1419.50 756.92 1420.00 793.43 1420.50 808.24 1420.57 808.49 1421.00 800.11 1421.50 769.73 1422.00 719.61 1422.50 653.90 1423.00 578.03 1423.50 498.30 1424.00 421.29 1424.50 353.40 1425.00 300.24 1425.50 266.21 1426.00 254.12 1426.01 254.11 1426.50 264.99 1427.00 297.91 1427.50 350.15 1428.00 417.39 1428.50 494.06 1429.00 573.82 1429.50 650.05 1430.00 716.46 1430.50 767.53 1431.00 799.04 1431.45 808.49 1431.50 808.39 1432.00 794.79 1432.50 759.37 1433.00 705.07 1433.50 636.39 1434.00 559.00 1434.50 479.32 1435.00 403.94 1435.50 339.11 1436.00 290.19 1436.50 261.23 1436.89 254.11 1437.00 254.64 1437.50 270.95 1438.00 308.82 1438.50 365.11 1439.00 435.16 1439.50 513.17 1440.00 592.68 1440.50 667.11 1441.00 730.30 1441.50 777.00 1442.00 803.37 1442.33 808.49 1442.50 807.20 1443.00 788.20 1443.50 747.92 1444.00 689.70 1444.50 618.37 1445.00 539.84 1445.50 460.59 1446.00 387.20 1446.50 325.74 1447.00 281.30 1447.50 257.56 1447.77 254.11 1448.00 256.49 1448.50 278.17 1449.00 320.80 1449.50 380.87 1450.00 453.39 1450.50 532.37 1451.00 611.25 1451.50 683.52 1452.00 743.18 1452.50 785.30 1453.00 806.38 1453.21 808.49 1453.50 804.70 1454.00 780.37 1454.50 735.42 1455.00 673.57 1455.50 599.94 1456.00 520.63 1456.50 442.20 1457.00 371.15 1457.50 313.36 1458.00 273.61 1458.50 255.20 1458.65 254.11 1459.00 259.65 1459.50 286.59 1460.00 333.80 1460.50 397.35 1461.00 472.00 1461.50 551.56 1462.00 629.44 1462.50 699.19 1463.00 755.05 1463.50 792.37 1464.00 808.08 1464.09 808.49 1464.50 800.88 1465.00 771.35 1465.50 721.95 1466.00 656.76 1466.50 581.18 1467.00 501.48 1467.50 424.24 1468.00 355.87 1468.50 302.02 1469.00 267.16 1469.50 254.17 1469.53 254.11 1470.00 264.12 1470.50 296.20 1471.00 347.74 1471.50 414.48 1472.00 490.89 1472.50 570.65 1473.00 647.15 1473.50 714.06 1474.00 765.84 1474.50 798.19 1474.97 808.49 1475.00 808.45 1475.50 795.76 1476.00 761.18 1476.50 707.56 1477.00 639.34 1477.50 562.18 1478.00 482.47 1478.50 406.79 1479.00 341.43 1479.50 291.79 1480.00 261.97 1480.41 254.11 1480.50 254.46 1481.00 269.87 1481.50 306.93 1482.00 362.56 1482.50 432.16 1483.00 509.98 1483.50 589.56 1484.00 664.31 1484.50 728.05 1485.00 775.50 1485.50 802.74 1485.85 808.49 1486.00 807.49 1486.50 789.38 1487.00 749.90 1487.50 692.32 1488.00 621.41 1488.50 543.04 1489.00 463.69 1489.50 389.94 1490.00 327.90 1490.50 282.70 1491.00 258.08 1491.29 254.11 1491.50 256.09 1492.00 276.88 1492.50 318.73 1493.00 378.19 1493.50 450.33 1494.00 529.17 1494.50 608.18 1495.00 680.83 1495.50 741.10 1496.00 784.00 1496.50 805.97 1496.73 808.49 1497.00 805.21 1497.50 781.76 1498.00 737.57 1498.50 676.31 1499.00 603.04 1499.50 523.83 1500.00 445.24 1500.50 373.77 1501.00 315.35 1501.50 274.81 1502.00 255.50 1502.17 254.11 1502.50 259.03 1503.00 285.11 1503.50 331.56 1504.00 394.56 1504.50 468.88 1505.00 548.36 1505.50 626.44 1506.00 696.63 1506.50 753.14 1507.00 791.28 1507.50 807.89 1507.61 808.49 1508.00 801.60 1508.50 772.93 1509.00 724.26 1509.50 659.61 1510.00 584.33 1510.50 504.66 1511.00 427.20 1511.50 358.36 1512.00 303.84 1512.50 268.15 1513.00 254.25 1513.05 254.11 1513.50 263.28 1514.00 294.52 1514.50 345.35 1515.00 411.58 1515.50 487.73 1516.00 567.48 1516.50 644.24 1517.00 711.64 1517.50 764.12 1518.00 797.31 1518.49 808.49 1518.50 808.48 1519.00 796.70 1519.50 762.95 1520.00 710.02 1520.50 642.28 1521.00 565.36 1521.50 485.62 1522.00 409.66 1522.50 343.77 1523.00 293.41 1523.50 262.75 1523.93 254.11 1524.00 254.32 1524.50 268.82 1525.00 305.06 1525.50 360.03 1526.00 429.18 1526.50 506.79 1527.00 586.42 1527.50 661.49 1528.00 725.79 1528.50 773.97 1529.00 802.07 1529.37 808.49 1529.50 807.74 1530.00 790.53 1530.50 751.85 1531.00 694.92 1531.50 624.43 1532.00 546.23 1532.50 466.80 1533.00 392.71 1533.50 330.09 1534.00 284.13 1534.50 258.64 1534.81 254.11 1535.00 255.72 1535.50 275.62 1536.00 316.69 1536.50 375.53 1537.00 447.27 1537.50 525.96 1538.00 605.10 1538.50 678.13 1539.00 738.99 1539.50 782.67 1540.00 805.52 1540.25 808.49 1540.50 805.68 1541.00 783.11 1541.50 739.70 1542.00 679.03 1542.50 606.13 1543.00 527.03 1543.50 448.29 1544.00 376.42 1544.50 317.37 1545.00 276.04 1545.50 255.84 1545.69 254.11 1546.00 258.45 1546.50 283.65 1547.00 329.36 1547.50 391.78 1548.00 465.76 1548.50 545.17 1549.00 623.42 1549.50 694.05 1550.00 751.21 1550.50 790.15 1551.00 807.66 1551.13 808.49 1551.50 802.29 1552.00 774.49 1552.50 726.54 1553.00 662.43 1553.50 587.47 1554.00 507.85 1554.50 430.17 1555.00 360.87 1555.50 305.68 1556.00 269.17 1556.50 254.36 1556.57 254.11 1557.00 262.49 1557.50 292.87 1558.00 342.99 1558.50 408.70 1559.00 484.57 1559.50 564.30 1560.00 641.31 1560.50 709.20 1561.00 762.36 1561.50 796.39 1562.00 808.48 1562.01 808.49 1562.50 797.61 1563.00 764.69 1563.50 712.45 1564.00 645.21 1564.50 568.54 1565.00 488.78 1565.50 412.55 1566.00 346.14 1566.50 295.07 1567.00 263.56 1567.45 254.11 1567.50 254.21 1568.00 267.81 1568.50 303.23 1569.00 357.53 1569.50 426.21 1570.00 503.60 1570.50 583.28 1571.00 658.66 1571.50 723.49 1572.00 772.41 1572.50 801.37 1572.89 808.49 1573.00 807.96 1573.50 791.65 1574.00 753.78 1574.50 697.49 1575.00 627.44 1575.50 549.43 1576.00 469.92 1576.50 395.49 1577.00 332.30 1577.50 285.60 1578.00 259.23 1578.33 254.11 1578.50 255.40 1579.00 274.40 1579.50 314.68 1580.00 372.90 1580.50 444.23 1581.00 522.76 1581.50 602.01 1582.00 675.40 1582.50 736.86 1583.00 781.30 1583.50 805.04 1583.77 808.49 1584.00 806.11 1584.50 784.43 1585.00 741.80 1585.50 681.73 1586.00 609.21 1586.50 530.23 1587.00 451.35 1587.50 379.08 1588.00 319.42 1588.50 277.30 1589.00 256.22 1589.21 254.11 1589.50 257.90 1590.00 282.23 1590.50 327.18 1591.00 389.03 1591.50 462.66 1592.00 541.97 1592.50 620.40 1593.00 691.45 1593.50 749.24 1594.00 788.99 1594.50 807.40 1594.65 808.49 1595.00 802.95 1595.50 776.01 1596.00 728.80 1596.50 665.25 1597.00 590.60 1597.50 511.04 1598.00 433.16 1598.50 363.41 1599.00 307.55 1599.50 270.23 1600.00 254.52 1600.09 254.11 1600.50 261.72 1601.00 291.25 1601.50 340.65 1602.00 405.84 1602.50 481.42 1603.00 561.12 1603.50 638.36 1604.00 706.73 1604.50 760.58 1605.00 795.44 1605.50 808.43 1605.53 808.49 1606.00 798.48 1606.50 766.40 1607.00 714.86 1607.50 648.12 1608.00 571.71 1608.50 491.95 1609.00 415.45 1609.50 348.54 1610.00 296.76 1610.50 264.41 1610.97 254.11 1611.00 254.15 1611.50 266.84 1612.00 301.42 1612.50 355.04 1613.00 423.26 1613.50 500.42 1614.00 580.13 1614.50 655.81 1615.00 721.17 1615.50 770.81 1616.00 800.63 1616.41 808.49 1616.50 808.14 1617.00 792.73 1617.50 755.67 1618.00 700.04 1618.50 630.44 1619.00 552.62 1619.50 473.04 1620.00 398.29 1620.50 334.55 1621.00 287.10 1621.50 259.86 1621.85 254.11 1622.00 255.11 1622.50 273.22 1623.00 312.70 1623.50 370.28 1624.00 441.19 1624.50 519.56 1625.00 598.91 1625.50 672.66 1626.00 734.70 1626.50 779.90 1627.00 804.52 1627.29 808.49 1627.50 806.51 1628.00 785.72 1628.50 743.87 1629.00 684.41 1629.50 612.27 1630.00 533.43 1630.50 454.42 1631.00 381.77 1631.50 321.50 1632.00 278.60 1632.50 256.63 1632.73 254.11 1633.00 257.39 1633.50 280.84 1634.00 325.03 1634.50 386.29 1635.00 459.56 1635.50 538.77 1636.00 617.36 1636.50 688.83 1637.00 747.25 1637.50 787.79 1638.00 807.10 1638.17 808.49 1638.50 803.57 1639.00 777.49 1639.50 731.04 1640.00 668.04 1640.50 593.72 1641.00 514.24 1641.50 436.16 1642.00 365.97 1642.50 309.46 1643.00 271.32 1643.50 254.71 1643.61 254.11 1644.00 261.00 1644.50 289.67 1645.00 338.34 1645.50 402.99 1646.00 478.27 1646.50 557.94 1647.00 635.40 1647.50 704.24 1648.00 758.76 1648.50 794.45 1649.00 808.35 1649.05 808.49 1649.50 799.32 1650.00 768.08 1650.50 717.25 1651.00 651.02 1651.50 574.87 1652.00 495.12 1652.50 418.36 1653.00 350.96 1653.50 298.48 1654.00 265.29 1654.49 254.11 1654.50 254.12 1655.00 265.90 1655.50 299.65 1656.00 352.58 1656.50 420.32 1657.00 497.24 1657.50 576.98 1658.00 652.94 1658.50 718.83 1659.00 769.19 1659.50 799.85 1659.93 808.49 1660.00 808.28 1660.50 793.78 1661.00 757.54 1661.50 702.57 1662.00 633.42 1662.50 555.81 1663.00 476.18 1663.50 401.11 1664.00 336.81 1664.50 288.63 1665.00 260.53 1665.37 254.11 1665.50 254.86 1666.00 272.07 1666.50 310.75 1667.00 367.68 1667.50 438.17 1668.00 516.37 1668.50 595.80 1669.00 669.89 1669.50 732.51 1670.00 778.47 1670.50 803.96 1670.81 808.49 1671.00 806.88 1671.50 786.98 1672.00 745.91 1672.50 687.07 1673.00 615.33 1673.50 536.64 1674.00 457.50 1674.50 384.47 1675.00 323.61 1675.50 279.93 1676.00 257.08 1676.25 254.11 1676.50 256.92 1677.00 279.49 1677.50 322.90 1678.00 383.57 1678.50 456.47 1679.00 535.57 1679.50 614.31 1680.00 686.18 1680.50 745.23 1681.00 786.56 1681.50 806.76 1681.69 808.49 1682.00 804.15 1682.50 778.95 1683.00 733.24 1683.50 670.82 1684.00 596.84 1684.50 517.43 1685.00 439.18 1685.50 368.55 1686.00 311.39 1686.50 272.45 1687.00 254.94 1687.13 254.11 1687.50 260.31 1688.00 288.11 1688.50 336.06 1689.00 400.17 1689.50 475.13 1690.00 554.75 1690.50 632.43 1691.00 701.73 1691.50 756.92 1692.00 793.43 1692.50 808.24 1692.57 808.49 1693.00 800.11 1693.50 769.73 1694.00 719.61 1694.50 653.90 1695.00 578.03 1695.50 498.30 1696.00 421.29 1696.50 353.40 1697.00 300.24 1697.50 266.21 1698.00 254.12 1698.01 254.11 1698.50 264.99 1699.00 297.91 1699.50 350.15 1700.00 417.39 1700.50 494.06 1701.00 573.82 1701.50 650.05 1702.00 716.46 1702.50 767.53 1703.00 799.04 1703.45 808.49 1703.50 808.39 1704.00 794.79 1704.50 759.37 1705.00 705.07 1705.50 636.39 1706.00 559.00 1706.50 479.32 1707.00 403.94 1707.50 339.11 1708.00 290.19 1708.50 261.23 1708.89 254.11 1709.00 254.64 1709.50 270.95 1710.00 308.82 1710.50 365.11 1711.00 435.16 1711.50 513.17 1712.00 592.68 1712.50 667.11 1713.00 730.30 1713.50 777.00 1714.00 803.37 1714.33 808.49 1714.50 807.20 1715.00 788.20 1715.50 747.92 1716.00 689.70 1716.50 618.37 1717.00 539.84 1717.50 460.59 1718.00 387.20 1718.50 325.74 1719.00 281.30 1719.50 257.56 1719.77 254.11 1720.00 256.49 1720.50 278.17 1721.00 320.80 1721.50 380.87 1722.00 453.39 1722.50 532.37 1723.00 611.25 1723.50 683.52 1724.00 743.18 1724.50 785.30 1725.00 806.38 1725.21 808.49 1725.50 804.70 1726.00 780.37 1726.50 735.42 1727.00 673.57 1727.50 599.94 1728.00 520.63 1728.50 442.20 1729.00 371.15 1729.50 313.36 1730.00 273.61 1730.50 255.20 1730.65 254.11 1731.00 259.65 1731.50 286.59 1732.00 333.80 1732.50 397.35 1733.00 472.00 1733.50 551.56 1734.00 629.44 1734.50 699.19 1735.00 755.05 1735.50 792.37 1736.00 808.08 1736.09 808.49 1736.50 800.88 1737.00 771.35 1737.50 721.95 1738.00 656.76 1738.50 581.18 1739.00 501.48 1739.50 424.24 1740.00 355.87 1740.50 302.02 1741.00 267.16 1741.50 254.17 1741.53 254.11 1742.00 264.12 1742.50 296.20 1743.00 347.74 1743.50 414.48 1744.00 490.89 1744.50 570.65 1745.00 647.15 1745.50 714.06 1746.00 765.84 1746.50 798.19 1746.97 808.49 1747.00 808.45 1747.50 795.76 1748.00 761.18 1748.50 707.56 1749.00 639.34 1749.50 562.18 1750.00 482.47 1750.50 406.79 1751.00 341.43 1751.50 291.79 1752.00 261.97 1752.41 254.11 1752.50 254.46 1753.00 269.87 1753.50 306.93 1754.00 362.56 1754.50 432.16 1755.00 509.98 1755.50 589.56 1756.00 664.31 1756.50 728.05 1757.00 775.50 1757.50 802.74 1757.85 808.49 1758.00 807.49 1758.50 789.38 1759.00 749.90 1759.50 692.32 1760.00 621.41 1760.50 543.04 1761.00 463.69 1761.50 389.94 1762.00 327.90 1762.50 282.70 1763.00 258.08 1763.29 254.11 1763.50 256.09 1764.00 276.88 1764.50 318.73 1765.00 378.19 1765.50 450.33 1766.00 529.17 1766.50 608.18 1767.00 680.83 1767.50 741.10 1768.00 784.00 1768.50 805.97 1768.73 808.49 1769.00 805.21 1769.50 781.76 1770.00 737.57 1770.50 676.31 1771.00 603.04 1771.50 523.83 1772.00 445.24 1772.50 373.77 1773.00 315.35 1773.50 274.81 1774.00 255.50 1774.17 254.11 1774.50 259.03 1775.00 285.11 1775.50 331.56 1776.00 394.56 1776.50 468.88 1777.00 548.36 1777.50 626.44 1778.00 696.63 1778.50 753.14 1779.00 791.28 1779.50 807.89 1779.61 808.49 1780.00 801.60 1780.50 772.93 1781.00 724.26 1781.50 659.61 1782.00 584.33 1782.50 504.66 1783.00 427.20 1783.50 358.36 1784.00 303.84 1784.50 268.15 1785.00 254.25 1785.05 254.11 1785.50 263.28 1786.00 294.52 1786.50 345.35 1787.00 411.58 1787.50 487.73 1788.00 567.48 1788.50 644.24 1789.00 711.64 1789.50 764.12 1790.00 797.31 1790.49 808.49 1790.50 808.48 1791.00 796.70 1791.50 762.95 1792.00 710.02 1792.50 642.28 1793.00 565.36 1793.50 485.62 1794.00 409.66 1794.50 343.77 1795.00 293.41 1795.50 262.75 1795.93 254.11 1796.00 254.32 1796.50 268.82 1797.00 305.06 1797.50 360.03 1798.00 429.18 1798.50 506.79 1799.00 586.42 1799.50 661.49 1800.00 725.79 1800.50 773.97 1801.00 802.07 1801.37 808.49 1801.50 807.74 1802.00 790.53 1802.50 751.85 1803.00 694.92 1803.50 624.43 1804.00 546.23 1804.50 466.80 1805.00 392.71 1805.50 330.09 1806.00 284.13 1806.50 258.64 1806.81 254.11 1807.00 255.72 1807.50 275.62 1808.00 316.69 1808.50 375.53 1809.00 447.27 1809.50 525.96 1810.00 605.10 1810.50 678.13 1811.00 738.99 1811.50 782.67 1812.00 805.52 1812.25 808.49 1812.50 805.68 1813.00 783.11 1813.50 739.70 1814.00 679.03 1814.50 606.13 1815.00 527.03 1815.50 448.29 1816.00 376.42 1816.50 317.37 1817.00 276.04 1817.50 255.84 1817.69 254.11 1818.00 258.45 1818.50 283.65 1819.00 329.36 1819.50 391.78 1820.00 465.76 1820.50 545.17 1821.00 623.42 1821.50 694.05 1822.00 751.21 1822.50 790.15 1823.00 807.66 1823.13 808.49 1823.50 802.29 1824.00 774.49 1824.50 726.54 1825.00 662.43 1825.50 587.47 1826.00 507.85 1826.50 430.17 1827.00 360.87 1827.50 305.68 1828.00 269.17 1828.50 254.36 1828.57 254.11 1829.00 262.49 1829.50 292.87 1830.00 342.99 1830.50 408.70 1831.00 484.57 1831.50 564.30 1832.00 641.31 1832.50 709.20 1833.00 762.36 1833.50 796.39 1834.00 808.48 1834.01 808.49 1834.50 797.61 1835.00 764.69 1835.50 712.45 1836.00 645.21 1836.50 568.54 1837.00 488.78 1837.50 412.55 1838.00 346.14 1838.50 295.07 1839.00 263.56 1839.45 254.11 1839.50 254.21 1840.00 267.81 1840.50 303.23 1841.00 357.53 1841.50 426.21 1842.00 503.60 1842.50 583.28 1843.00 658.66 1843.50 723.49 1844.00 772.41 1844.50 801.37 1844.89 808.49 1845.00 807.96 1845.50 791.65 1846.00 753.78 1846.50 697.49 1847.00 627.44 1847.50 549.43 1848.00 469.92 1848.50 395.49 1849.00 332.30 1849.50 285.60 1850.00 259.23 1850.33 254.11 1850.50 255.40 1851.00 274.40 1851.50 314.68 1852.00 372.90 1852.50 444.23 1853.00 522.76 1853.50 602.01 1854.00 675.40 1854.50 736.86 1855.00 781.30 1855.50 805.04 1855.77 808.49 1856.00 806.11 1856.50 784.43 1857.00 741.80 1857.50 681.73 1858.00 609.21 1858.50 530.23 1859.00 451.35 1859.50 379.08 1860.00 319.42 1860.50 277.30 1861.00 256.22 1861.21 254.11 1861.50 257.90 1862.00 282.23 1862.50 327.18 1863.00 389.03 1863.50 462.66 1864.00 541.97 1864.50 620.40 1865.00 691.45 1865.50 749.24 1866.00 788.99 1866.50 807.40 1866.65 808.49 1867.00 802.95 1867.50 776.01 1868.00 728.80 1868.50 665.25 1869.00 590.60 1869.50 511.04 1870.00 433.16 1870.50 363.41 1871.00 307.55 1871.50 270.23 1872.00 254.52 1872.09 254.11 1872.50 261.72 1873.00 291.25" fill="none" stroke="#0000ff" stroke-width="1.0"/>
<path d="M1329.00 711.34 1329.50 733.48 1329.91 739.19 1330.00 738.89 1330.50 727.10 1331.00 699.11 1331.50 657.22 1332.00 604.90 1332.50 546.49 1333.00 486.83 1333.50 430.84 1334.00 383.17 1334.50 347.77 1335.00 327.56 1335.35 323.41 1335.50 324.23 1336.00 338.03 1336.50 367.84 1337.00 411.19 1337.50 464.48 1338.00 523.30 1338.50 582.78 1339.00 638.00 1339.50 684.39 1340.00 718.10 1340.50 736.35 1340.79 739.19 1341.00 737.61 1341.50 721.80 1342.00 690.21 1342.50 645.46 1343.00 591.26 1343.50 532.10 1344.00 472.87 1344.50 418.48 1345.00 373.43 1345.50 341.45 1346.00 325.19 1346.23 323.41 1346.50 326.00 1347.00 343.80 1347.50 377.13 1348.00 423.22 1348.50 478.27 1349.00 537.70 1349.50 596.61 1350.00 650.10 1350.50 693.76 1351.00 723.97 1351.50 738.23 1351.67 739.19 1352.00 735.35 1352.50 715.58 1353.00 680.55 1353.50 633.16 1354.00 577.34 1354.50 517.70 1355.00 459.20 1355.50 406.66 1356.00 364.44 1356.50 336.04 1357.00 323.80 1357.11 323.41 1357.50 328.75 1358.00 350.47 1358.50 387.16 1359.00 435.78 1359.50 492.31 1360.00 552.07 1360.50 610.12 1361.00 661.63 1361.50 702.35 1362.00 728.92 1362.50 739.11 1362.55 739.19 1363.00 732.11 1363.50 708.47 1364.00 670.17 1364.50 620.37 1365.00 563.19 1365.50 503.37 1366.00 445.87 1366.50 395.44 1367.00 356.26 1367.50 331.57 1367.99 323.41 1368.00 323.42 1368.50 332.48 1369.00 358.00 1369.50 397.88 1370.00 448.80 1370.50 506.55 1371.00 566.35 1371.50 623.25 1372.00 672.53 1372.50 710.12 1373.00 732.91 1373.43 739.19 1373.50 739.00 1374.00 727.90 1374.50 700.51 1375.00 659.12 1375.50 607.14 1376.00 548.89 1376.50 489.17 1377.00 432.95 1377.50 384.87 1378.00 348.91 1378.50 328.05 1378.87 323.41 1379.00 324.03 1379.50 337.16 1380.00 366.37 1380.50 409.24 1381.00 462.21 1381.50 520.90 1382.00 580.45 1382.50 635.94 1383.00 682.76 1383.50 717.04 1384.00 735.94 1384.31 739.19 1384.50 737.89 1385.00 722.75 1385.50 691.75 1386.00 647.46 1386.50 593.56 1387.00 534.50 1387.50 475.18 1388.00 420.50 1388.50 375.00 1389.00 342.44 1389.50 325.52 1389.75 323.41 1390.00 325.63 1390.50 342.78 1391.00 375.53 1391.50 421.18 1392.00 475.95 1392.50 535.30 1393.00 594.32 1393.50 648.12 1394.00 692.25 1394.50 723.06 1395.00 737.98 1395.19 739.19 1395.50 735.80 1396.00 716.68 1396.50 682.21 1397.00 635.24 1397.50 579.68 1398.00 520.10 1398.50 461.45 1399.00 408.59 1399.50 365.88 1400.00 336.88 1400.50 323.97 1400.63 323.41 1401.00 328.22 1401.50 349.30 1402.00 385.44 1402.50 433.65 1403.00 489.96 1403.50 549.68 1404.00 607.89 1404.50 659.75 1405.00 700.98 1405.50 728.16 1406.00 739.04 1406.07 739.19 1406.50 732.71 1407.00 709.72 1407.50 671.94 1408.00 622.53 1408.50 565.56 1409.00 505.75 1409.50 448.06 1410.00 397.26 1410.50 357.56 1411.00 332.25 1411.50 323.41 1411.51 323.41 1412.00 331.79 1412.50 356.69 1413.00 396.04 1413.50 446.60 1414.00 504.16 1414.50 563.98 1415.00 621.09 1415.50 670.76 1416.00 708.89 1416.50 732.31 1416.95 739.19 1417.00 739.09 1417.50 728.67 1418.00 701.90 1418.50 661.01 1419.00 609.37 1419.50 551.28 1420.00 491.53 1420.50 435.07 1421.00 386.58 1421.50 350.07 1422.00 328.57 1422.39 323.41 1422.50 323.86 1423.00 336.32 1423.50 364.92 1424.00 407.30 1424.50 459.95 1425.00 518.50 1425.50 578.12 1426.00 633.86 1426.50 681.10 1427.00 715.95 1427.50 735.50 1427.83 739.19 1428.00 738.15 1428.50 723.67 1429.00 693.26 1429.50 649.45 1430.00 595.85 1430.50 536.90 1431.00 477.49 1431.50 422.54 1432.00 376.59 1432.50 343.46 1433.00 325.87 1433.27 323.41 1433.50 325.30 1434.00 341.78 1434.50 373.95 1435.00 419.15 1435.50 473.64 1436.00 532.90 1436.50 592.03 1437.00 646.13 1437.50 690.72 1438.00 722.12 1438.50 737.71 1438.71 739.19 1439.00 736.21 1439.50 717.75 1440.00 683.85 1440.50 637.32 1441.00 582.01 1441.50 522.50 1442.00 463.72 1442.50 410.53 1443.00 367.35 1443.50 337.74 1444.00 324.16 1444.15 323.41 1444.50 327.72 1445.00 348.15 1445.50 383.74 1446.00 431.54 1446.50 487.61 1447.00 547.29 1447.50 605.65 1448.00 657.86 1448.50 699.58 1449.00 727.37 1449.50 738.93 1449.59 739.19 1450.00 733.29 1450.50 710.94 1451.00 673.70 1451.50 624.68 1452.00 567.92 1452.50 508.14 1453.00 450.27 1453.50 399.11 1454.00 358.89 1454.50 332.95 1455.00 323.44 1455.03 323.41 1455.50 331.13 1456.00 355.40 1456.50 394.23 1457.00 444.41 1457.50 501.79 1458.00 561.61 1458.50 618.92 1459.00 668.97 1459.50 707.63 1460.00 731.69 1460.47 739.19 1460.50 739.15 1461.00 729.41 1461.50 703.26 1462.00 662.87 1462.50 611.59 1463.00 553.67 1463.50 493.89 1464.00 437.21 1464.50 388.31 1465.00 351.26 1465.50 329.12 1465.91 323.41 1466.00 323.71 1466.50 335.50 1467.00 363.49 1467.50 405.38 1468.00 457.70 1468.50 516.11 1469.00 575.77 1469.50 631.76 1470.00 679.43 1470.50 714.83 1471.00 735.04 1471.35 739.19 1471.50 738.37 1472.00 724.57 1472.50 694.76 1473.00 651.41 1473.50 598.12 1474.00 539.30 1474.50 479.82 1475.00 424.60 1475.50 378.21 1476.00 344.50 1476.50 326.25 1476.79 323.41 1477.00 324.99 1477.50 340.80 1478.00 372.39 1478.50 417.14 1479.00 471.34 1479.50 530.50 1480.00 589.73 1480.50 644.12 1481.00 689.17 1481.50 721.15 1482.00 737.41 1482.23 739.19 1482.50 736.60 1483.00 718.80 1483.50 685.47 1484.00 639.38 1484.50 584.33 1485.00 524.90 1485.50 465.99 1486.00 412.50 1486.50 368.84 1487.00 338.63 1487.50 324.37 1487.67 323.41 1488.00 327.25 1488.50 347.02 1489.00 382.05 1489.50 429.44 1490.00 485.26 1490.50 544.90 1491.00 603.40 1491.50 655.94 1492.00 698.16 1492.50 726.56 1493.00 738.80 1493.11 739.19 1493.50 733.85 1494.00 712.13 1494.50 675.44 1495.00 626.82 1495.50 570.29 1496.00 510.53 1496.50 452.48 1497.00 400.97 1497.50 360.25 1498.00 333.68 1498.50 323.49 1498.55 323.41 1499.00 330.49 1499.50 354.13 1500.00 392.43 1500.50 442.23 1501.00 499.41 1501.50 559.23 1502.00 616.73 1502.50 667.16 1503.00 706.34 1503.50 731.03 1503.99 739.19 1504.00 739.18 1504.50 730.12 1505.00 704.60 1505.50 664.72 1506.00 613.80 1506.50 556.05 1507.00 496.25 1507.50 439.35 1508.00 390.07 1508.50 352.48 1509.00 329.69 1509.43 323.41 1509.50 323.60 1510.00 334.70 1510.50 362.09 1511.00 403.48 1511.50 455.46 1512.00 513.71 1512.50 573.43 1513.00 629.65 1513.50 677.73 1514.00 713.69 1514.50 734.55 1514.87 739.19 1515.00 738.57 1515.50 725.44 1516.00 696.23 1516.50 653.36 1517.00 600.39 1517.50 541.70 1518.00 482.15 1518.50 426.66 1519.00 379.84 1519.50 345.56 1520.00 326.66 1520.31 323.41 1520.50 324.71 1521.00 339.85 1521.50 370.85 1522.00 415.14 1522.50 469.04 1523.00 528.10 1523.50 587.42 1524.00 642.10 1524.50 687.60 1525.00 720.16 1525.50 737.08 1525.75 739.19 1526.00 736.97 1526.50 719.82 1527.00 687.07 1527.50 641.42 1528.00 586.65 1528.50 527.30 1529.00 468.28 1529.50 414.48 1530.00 370.35 1530.50 339.54 1531.00 324.62 1531.19 323.41 1531.50 326.80 1532.00 345.92 1532.50 380.39 1533.00 427.36 1533.50 482.92 1534.00 542.50 1534.50 601.15 1535.00 654.01 1535.50 696.72 1536.00 725.72 1536.50 738.63 1536.63 739.19 1537.00 734.38 1537.50 713.30 1538.00 677.16 1538.50 628.95 1539.00 572.64 1539.50 512.92 1540.00 454.71 1540.50 402.85 1541.00 361.62 1541.50 334.44 1542.00 323.56 1542.07 323.41 1542.50 329.89 1543.00 352.88 1543.50 390.66 1544.00 440.07 1544.50 497.04 1545.00 556.85 1545.50 614.54 1546.00 665.34 1546.50 705.04 1547.00 730.35 1547.50 739.19 1547.51 739.19 1548.00 730.81 1548.50 705.91 1549.00 666.56 1549.50 616.00 1550.00 558.44 1550.50 498.62 1551.00 441.51 1551.50 391.84 1552.00 353.71 1552.50 330.29 1552.95 323.41 1553.00 323.51 1553.50 333.93 1554.00 360.70 1554.50 401.59 1555.00 453.23 1555.50 511.32 1556.00 571.07 1556.50 627.53 1557.00 676.02 1557.50 712.53 1558.00 734.03 1558.39 739.19 1558.50 738.74 1559.00 726.28 1559.50 697.68 1560.00 655.30 1560.50 602.65 1561.00 544.10 1561.50 484.48 1562.00 428.74 1562.50 381.50 1563.00 346.65 1563.50 327.10 1563.83 323.41 1564.00 324.45 1564.50 338.93 1565.00 369.34 1565.50 413.15 1566.00 466.75 1566.50 525.70 1567.00 585.11 1567.50 640.06 1568.00 686.01 1568.50 719.14 1569.00 736.73 1569.27 739.19 1569.50 737.30 1570.00 720.82 1570.50 688.65 1571.00 643.45 1571.50 588.96 1572.00 529.70 1572.50 470.57 1573.00 416.47 1573.50 371.88 1574.00 340.48 1574.50 324.89 1574.71 323.41 1575.00 326.39 1575.50 344.85 1576.00 378.75 1576.50 425.28 1577.00 480.59 1577.50 540.10 1578.00 598.88 1578.50 652.07 1579.00 695.25 1579.50 724.86 1580.00 738.44 1580.15 739.19 1580.50 734.88 1581.00 714.45 1581.50 678.86 1582.00 631.06 1582.50 574.99 1583.00 515.31 1583.50 456.95 1584.00 404.74 1584.50 363.02 1585.00 335.23 1585.50 323.67 1585.59 323.41 1586.00 329.31 1586.50 351.66 1587.00 388.90 1587.50 437.92 1588.00 494.68 1588.50 554.46 1589.00 612.33 1589.50 663.49 1590.00 703.71 1590.50 729.65 1591.00 739.16 1591.03 739.19 1591.50 731.47 1592.00 707.20 1592.50 668.37 1593.00 618.19 1593.50 560.81 1594.00 500.99 1594.50 443.68 1595.00 393.63 1595.50 354.97 1596.00 330.91 1596.47 323.41 1596.50 323.45 1597.00 333.19 1597.50 359.34 1598.00 399.73 1598.50 451.01 1599.00 508.93 1599.50 568.71 1600.00 625.39 1600.50 674.29 1601.00 711.34 1601.50 733.48 1601.91 739.19 1602.00 738.89 1602.50 727.10 1603.00 699.11 1603.50 657.22 1604.00 604.90 1604.50 546.49 1605.00 486.83 1605.50 430.84 1606.00 383.17 1606.50 347.77 1607.00 327.56 1607.35 323.41 1607.50 324.23 1608.00 338.03 1608.50 367.84 1609.00 411.19 1609.50 464.48 1610.00 523.30 1610.50 582.78 1611.00 638.00 1611.50 684.39 1612.00 718.10 1612.50 736.35 1612.79 739.19 1613.00 737.61 1613.50 721.80 1614.00 690.21 1614.50 645.46 1615.00 591.26 1615.50 532.10 1616.00 472.87 1616.50 418.48 1617.00 373.43 1617.50 341.45 1618.00 325.19 1618.23 323.41 1618.50 326.00 1619.00 343.80 1619.50 377.13 1620.00 423.22 1620.50 478.27 1621.00 537.70 1621.50 596.61 1622.00 650.10 1622.50 693.76 1623.00 723.97 1623.50 738.23 1623.67 739.19 1624.00 735.35 1624.50 715.58 1625.00 680.55 1625.50 633.16 1626.00 577.34 1626.50 517.70 1627.00 459.20 1627.50 406.66 1628.00 364.44 1628.50 336.04 1629.00 323.80 1629.11 323.41 1629.50 328.75 1630.00 350.47 1630.50 387.16 1631.00 435.78 1631.50 492.31 1632.00 552.07 1632.50 610.12 1633.00 661.63 1633.50 702.35 1634.00 728.92 1634.50 739.11 1634.55 739.19 1635.00 732.11 1635.50 708.47 1636.00 670.17 1636.50 620.37 1637.00 563.19 1637.50 503.37 1638.00 445.87 1638.50 395.44 1639.00 356.26 1639.50 331.57 1639.99 323.41 1640.00 323.42 1640.50 332.48 1641.00 358.00 1641.50 397.88 1642.00 448.80 1642.50 506.55 1643.00 566.35 1643.50 623.25 1644.00 672.53 1644.50 710.12 1645.00 732.91 1645.43 739.19 1645.50 739.00 1646.00 727.90 1646.50 700.51 1647.00 659.12 1647.50 607.14 1648.00 548.89 1648.50 489.17 1649.00 432.95 1649.50 384.87 1650.00 348.91 1650.50 328.05 1650.87 323.41 1651.00 324.03 1651.50 337.16 1652.00 366.37 1652.50 409.24 1653.00 462.21 1653.50 520.90 1654.00 580.45 1654.50 635.94 1655.00 682.76 1655.50 717.04 1656.00 735.94 1656.31 739.19 1656.50 737.89 1657.00 722.75 1657.50 691.75 1658.00 647.46 1658.50 593.56 1659.00 534.50 1659.50 475.18 1660.00 420.50 1660.50 375.00 1661.00 342.44 1661.50 325.52 1661.75 323.41 1662.00 325.63 1662.50 342.78 1663.00 375.53 1663.50 421.18 1664.00 475.95 1664.50 535.30 1665.00 594.32 1665.50 648.12 1666.00 692.25 1666.50 723.06 1667.00 737.98 1667.19 739.19 1667.50 735.80 1668.00 716.68 1668.50 682.21 1669.00 635.24 1669.50 579.68 1670.00 520.10 1670.50 461.45 1671.00 408.59 1671.50 365.88 1672.00 336.88 1672.50 323.97 1672.63 323.41 1673.00 328.22 1673.50 349.30 1674.00 385.44 1674.50 433.65 1675.00 489.96 1675.50 549.68 1676.00 607.89 1676.50 659.75 1677.00 700.98 1677.50 728.16 1678.00 739.04 1678.07 739.19 1678.50 732.71 1679.00 709.72 1679.50 671.94 1680.00 622.53 1680.50 565.56 1681.00 505.75 1681.50 448.06 1682.00 397.26 1682.50 357.56 1683.00 332.25 1683.50 323.41 1683.51 323.41 1684.00 331.79 1684.50 356.69 1685.00 396.04 1685.50 446.60 1686.00 504.16 1686.50 563.98 1687.00 621.09 1687.50 670.76 1688.00 708.89 1688.50 732.31 1688.95 739.19 1689.00 739.09 1689.50 728.67 1690.00 701.90 1690.50 661.01 1691.00 609.37 1691.50 551.28 1692.00 491.53 1692.50 435.07 1693.00 386.58 1693.50 350.07 1694.00 328.57 1694.39 323.41 1694.50 323.86 1695.00 336.32 1695.50 364.92 1696.00 407.30 1696.50 459.95 1697.00 518.50 1697.50 578.12 1698.00 633.86 1698.50 681.10 1699.00 715.95 1699.50 735.50 1699.83 739.19 1700.00 738.15 1700.50 723.67 1701.00 693.26 1701.50 649.45 1702.00 595.85 1702.50 536.90 1703.00 477.49 1703.50 422.54 1704.00 376.59 1704.50 343.46 1705.00 325.87 1705.27 323.41 1705.50 325.30 1706.00 341.78 1706.50 373.95 1707.00 419.15 1707.50 473.64 1708.00 532.90 1708.50 592.03 1709.00 646.13 1709.50 690.72 1710.00 722.12 1710.50 737.71 1710.71 739.19 1711.00 736.21 1711.50 717.75 1712.00 683.85 1712.50 637.32 1713.00 582.01 1713.50 522.50 1714.00 463.72 1714.50 410.53 1715.00 367.35 1715.50 337.74 1716.00 324.16 1716.15 323.41 1716.50 327.72 1717.00 348.15 1717.50 383.74 1718.00 431.54 1718.50 487.61 1719.00 547.29 1719.50 605.65 1720.00 657.86 1720.50 699.58 1721.00 727.37 1721.50 738.93 1721.59 739.19 1722.00 733.29 1722.50 710.94 1723.00 673.70 1723.50 624.68 1724.00 567.92 1724.50 508.14 1725.00 450.27 1725.50 399.11 1726.00 358.89 1726.50 332.95 1727.00 323.44 1727.03 323.41 1727.50 331.13 1728.00 355.40 1728.50 394.23 1729.00 444.41 1729.50 501.79 1730.00 561.61 1730.50 618.92 1731.00 668.97 1731.50 707.63 1732.00 731.69 1732.47 739.19 1732.50 739.15 1733.00 729.41 1733.50 703.26 1734.00 662.87 1734.50 611.59 1735.00 553.67 1735.50 493.89 1736.00 437.21 1736.50 388.31 1737.00 351.26 1737.50 329.12 1737.91 323.41 1738.00 323.71 1738.50 335.50 1739.00 363.49 1739.50 405.38 1740.00 457.70 1740.50 516.11 1741.00 575.77 1741.50 631.76 1742.00 679.43 1742.50 714.83 1743.00 735.04 1743.35 739.19 1743.50 738.37 1744.00 724.57 1744.50 694.76 1745.00 651.41 1745.50 598.12 1746.00 539.30 1746.50 479.82 1747.00 424.60 1747.50 378.21 1748.00 344.50 1748.50 326.25 1748.79 323.41 1749.00 324.99 1749.50 340.80 1750.00 372.39 1750.50 417.14 1751.00 471.34 1751.50 530.50 1752.00 589.73 1752.50 644.12 1753.00 689.17 1753.50 721.15 1754.00 737.41 1754.23 739.19 1754.50 736.60 1755.00 718.80 1755.50 685.47 1756.00 639.38 1756.50 584.33 1757.00 524.90 1757.50 465.99 1758.00 412.50 1758.50 368.84 1759.00 338.63 1759.50 324.37 1759.67 323.41 1760.00 327.25 1760.50 347.02 1761.00 382.05 1761.50 429.44 1762.00 485.26 1762.50 544.90 1763.00 603.40 1763.50 655.94 1764.00 698.16 1764.50 726.56 1765.00 738.80 1765.11 739.19 1765.50 733.85 1766.00 712.13 1766.50 675.44 1767.00 626.82 1767.50 570.29 1768.00 510.53 1768.50 452.48 1769.00 400.97 1769.50 360.25 1770.00 333.68 1770.50 323.49 1770.55 323.41 1771.00 330.49 1771.50 354.13 1772.00 392.43 1772.50 442.23 1773.00 499.41 1773.50 559.23 1774.00 616.73 1774.50 667.16 1775.00 706.34 1775.50 731.03 1775.99 739.19 1776.00 739.18 1776.50 730.12 1777.00 704.60 1777.50 664.72 1778.00 613.80 1778.50 556.05 1779.00 496.25 1779.50 439.35 1780.00 390.07 1780.50 352.48 1781.00 329.69 1781.43 323.41 1781.50 323.60 1782.00 334.70 1782.50 362.09 1783.00 403.48 1783.50 455.46 1784.00 513.71 1784.50 573.43 1785.00 629.65 1785.50 677.73 1786.00 713.69 1786.50 734.55 1786.87 739.19 1787.00 738.57 1787.50 725.44 1788.00 696.23 1788.50 653.36 1789.00 600.39 1789.50 541.70 1790.00 482.15 1790.50 426.66 1791.00 379.84 1791.50 345.56 1792.00 326.66 1792.31 323.41 1792.50 324.71 1793.00 339.85 1793.50 370.85 1794.00 415.14 1794.50 469.04 1795.00 528.10 1795.50 587.42 1796.00 642.10 1796.50 687.60 1797.00 720.16 1797.50 737.08 1797.75 739.19 1798.00 736.97 1798.50 719.82 1799.00 687.07 1799.50 641.42 1800.00 586.65 1800.50 527.30 1801.00 468.28 1801.50 414.48 1802.00 370.35 1802.50 339.54 1803.00 324.62 1803.19 323.41 1803.50 326.80 1804.00 345.92 1804.50 380.39 1805.00 427.36 1805.50 482.92 1806.00 542.50 1806.50 601.15 1807.00 654.01 1807.50 696.72 1808.00 725.72 1808.50 738.63 1808.63 739.19 1809.00 734.38 1809.50 713.30 1810.00 677.16 1810.50 628.95 1811.00 572.64 1811.50 512.92 1812.00 454.71 1812.50 402.85 1813.00 361.62 1813.50 334.44 1814.00 323.56 1814.07 323.41 1814.50 329.89 1815.00 352.88 1815.50 390.66 1816.00 440.07 1816.50 497.04 1817.00 556.85 1817.50 614.54 1818.00 665.34 1818.50 705.04 1819.00 730.35 1819.50 739.19 1819.51 739.19 1820.00 730.81 1820.50 705.91 1821.00 666.56 1821.50 616.00 1822.00 558.44 1822.50 498.62 1823.00 441.51 1823.50 391.84 1824.00 353.71 1824.50 330.29 1824.95 323.41 1825.00 323.51 1825.50 333.93 1826.00 360.70 1826.50 401.59 1827.00 453.23 1827.50 511.32 1828.00 571.07 1828.50 627.53 1829.00 676.02 1829.50 712.53 1830.00 734.03 1830.39 739.19 1830.50 738.74 1831.00 726.28 1831.50 697.68 1832.00 655.30 1832.50 602.65 1833.00 544.10 1833.50 484.48 1834.00 428.74 1834.50 381.50 1835.00 346.65 1835.50 327.10 1835.83 323.41 1836.00 324.45 1836.50 338.93 1837.00 369.34 1837.50 413.15 1838.00 466.75 1838.50 525.70 1839.00 585.11 1839.50 640.06 1840.00 686.01 1840.50 719.14 1841.00 736.73 1841.27 739.19 1841.50 737.30 1842.00 720.82 1842.50 688.65 1843.00 643.45 1843.50 588.96 1844.00 529.70 1844.50 470.57 1845.00 416.47 1845.50 371.88 1846.00 340.48 1846.50 324.89 1846.71 323.41 1847.00 326.39 1847.50 344.85 1848.00 378.75 1848.50 425.28 1849.00 480.59 1849.50 540.10 1850.00 598.88 1850.50 652.07 1851.00 695.25 1851.50 724.86 1852.00 738.44 1852.15 739.19 1852.50 734.88 1853.00 714.45 1853.50 678.86 1854.00 631.06 1854.50 574.99 1855.00 515.31 1855.50 456.95 1856.00 404.74 1856.50 363.02 1857.00 335.23 1857.50 323.67 1857.59 323.41 1858.00 329.31 1858.50 351.66 1859.00 388.90 1859.50 437.92 1860.00 494.68 1860.50 554.46 1861.00 612.33 1861.50 663.49 1862.00 703.71 1862.50 729.65 1863.00 739.16 1863.03 739.19 1863.50 731.47 1864.00 707.20 1864.50 668.37 1865.00 618.19 1865.50 560.81 1866.00 500.99 1866.50 443.68 1867.00 393.63 1867.50 354.97 1868.00 330.91 1868.47 323.41 1868.50 323.45 1869.00 333.19 1869.50 359.34 1870.00 399.73 1870.50 451.01 1871.00 508.93 1871.50 568.71 1872.00 625.39 1872.50 674.29 1873.00 711.34" fill="none" stroke="#008000" stroke-width="1.0"/>
<path d="M1329.00 531.30 1329.50 491.84 1330.00 455.64 1330.50 425.71 1331.00 404.52 1331.50 393.82 1331.72 392.71 1332.00 394.52 1332.50 406.53 1333.00 428.88 1333.50 459.71 1334.00 496.46 1334.50 536.10 1335.00 575.34 1335.50 610.94 1336.00 639.94 1336.50 659.95 1337.00 669.30 1337.16 669.89 1337.50 667.23 1338.00 653.90 1338.50 630.43 1339.00 598.74 1339.50 561.47 1340.00 521.70 1340.50 482.73 1341.00 447.78 1341.50 419.74 1342.00 400.94 1342.50 392.94 1342.60 392.71 1343.00 396.39 1343.50 411.01 1344.00 435.59 1344.50 468.10 1345.00 505.83 1345.50 545.68 1346.00 584.34 1346.50 618.60 1347.00 645.64 1347.50 663.21 1348.00 669.86 1348.04 669.89 1348.50 665.03 1349.00 649.13 1349.50 623.48 1350.00 590.19 1350.50 552.03 1351.00 512.15 1351.50 473.86 1352.00 440.32 1352.50 414.32 1353.00 398.00 1353.48 392.71 1353.50 392.72 1354.00 398.91 1354.50 416.06 1355.00 442.76 1355.50 476.79 1356.00 515.33 1356.50 555.19 1357.00 593.08 1357.50 625.85 1358.00 650.79 1358.50 665.84 1358.92 669.89 1359.00 669.75 1359.50 662.19 1360.00 643.80 1360.50 616.09 1361.00 581.37 1361.50 542.49 1362.00 502.69 1362.50 465.26 1363.00 433.30 1363.50 409.45 1364.00 395.69 1364.36 392.71 1364.50 393.16 1365.00 402.07 1365.50 421.67 1366.00 450.36 1366.50 485.74 1367.00 524.90 1367.50 564.59 1368.00 601.52 1368.50 632.64 1369.00 655.36 1369.50 667.82 1369.80 669.89 1370.00 668.97 1370.50 658.72 1371.00 637.92 1371.50 608.30 1372.00 572.30 1372.50 532.90 1373.00 493.37 1373.50 456.98 1374.00 426.75 1374.50 405.17 1375.00 394.04 1375.24 392.71 1375.50 394.27 1376.00 405.84 1376.50 427.81 1377.00 458.34 1377.50 494.91 1378.00 534.50 1378.50 573.82 1379.00 609.62 1379.50 638.94 1380.00 659.34 1380.50 669.14 1380.68 669.89 1381.00 667.53 1381.50 654.64 1382.00 631.54 1382.50 600.13 1383.00 563.03 1383.50 523.30 1384.00 484.23 1384.50 449.06 1385.00 420.70 1385.50 401.50 1386.00 393.04 1386.12 392.71 1386.50 396.03 1387.00 410.22 1387.50 434.44 1388.00 466.67 1388.50 504.26 1389.00 544.09 1389.50 582.85 1390.00 617.35 1390.50 644.73 1391.00 662.71 1391.50 669.81 1391.56 669.89 1392.00 665.44 1392.50 649.97 1393.00 624.67 1393.50 591.64 1394.00 553.61 1394.50 513.74 1395.00 475.32 1395.50 441.53 1396.00 415.18 1396.50 398.44 1397.00 392.71 1397.50 398.44 1398.00 415.18 1398.50 441.53 1399.00 475.32 1399.50 513.74 1400.00 553.61 1400.50 591.64 1401.00 624.67 1401.50 649.97 1402.00 665.44 1402.44 669.89 1402.50 669.81 1403.00 662.71 1403.50 644.73 1404.00 617.35 1404.50 582.85 1405.00 544.09 1405.50 504.26 1406.00 466.67 1406.50 434.44 1407.00 410.22 1407.50 396.03 1407.88 392.71 1408.00 393.04 1408.50 401.50 1409.00 420.70 1409.50 449.06 1410.00 484.23 1410.50 523.30 1411.00 563.03 1411.50 600.13 1412.00 631.54 1412.50 654.64 1413.00 667.53 1413.32 669.89 1413.50 669.14 1414.00 659.34 1414.50 638.94 1415.00 609.62 1415.50 573.82 1416.00 534.50 1416.50 494.91 1417.00 458.34 1417.50 427.81 1418.00 405.84 1418.50 394.27 1418.76 392.71 1419.00 394.04 1419.50 405.17 1420.00 426.75 1420.50 456.98 1421.00 493.37 1421.50 532.90 1422.00 572.30 1422.50 608.30 1423.00 637.92 1423.50 658.72 1424.00 668.97 1424.20 669.89 1424.50 667.82 1425.00 655.36 1425.50 632.64 1426.00 601.52 1426.50 564.59 1427.00 524.90 1427.50 485.74 1428.00 450.36 1428.50 421.67 1429.00 402.07 1429.50 393.16 1429.64 392.71 1430.00 395.69 1430.50 409.45 1431.00 433.30 1431.50 465.26 1432.00 502.69 1432.50 542.49 1433.00 581.37 1433.50 616.09 1434.00 643.80 1434.50 662.19 1435.00 669.75 1435.08 669.89 1435.50 665.84 1436.00 650.79 1436.50 625.85 1437.00 593.08 1437.50 555.19 1438.00 515.33 1438.50 476.79 1439.00 442.76 1439.50 416.06 1440.00 398.91 1440.50 392.72 1440.52 392.71 1441.00 398.00 1441.50 414.32 1442.00 440.32 1442.50 473.86 1443.00 512.15 1443.50 552.03 1444.00 590.19 1444.50 623.48 1445.00 649.13 1445.50 665.03 1445.96 669.89 1446.00 669.86 1446.50 663.21 1447.00 645.64 1447.50 618.60 1448.00 584.34 1448.50 545.68 1449.00 505.83 1449.50 468.10 1450.00 435.59 1450.50 411.01 1451.00 396.39 1451.40 392.71 1451.50 392.94 1452.00 400.94 1452.50 419.74 1453.00 447.78 1453.50 482.73 1454.00 521.70 1454.50 561.47 1455.00 598.74 1455.50 630.43 1456.00 653.90 1456.50 667.23 1456.84 669.89 1457.00 669.30 1457.50 659.95 1458.00 639.94 1458.50 610.94 1459.00 575.34 1459.50 536.10 1460.00 496.46 1460.50 459.71 1461.00 428.88 1461.50 406.53 1462.00 394.52 1462.28 392.71 1462.50 393.82 1463.00 404.52 1463.50 425.71 1464.00 455.64 1464.50 491.84 1465.00 531.30 1465.50 570.76 1466.00 606.96 1466.50 636.89 1467.00 658.08 1467.50 668.78 1467.72 669.89 1468.00 668.08 1468.50 656.07 1469.00 633.72 1469.50 602.89 1470.00 566.14 1470.50 526.50 1471.00 487.26 1471.50 451.66 1472.00 422.66 1472.50 402.65 1473.00 393.30 1473.16 392.71 1473.50 395.37 1474.00 408.70 1474.50 432.17 1475.00 463.86 1475.50 501.13 1476.00 540.90 1476.50 579.87 1477.00 614.82 1477.50 642.86 1478.00 661.66 1478.50 669.66 1478.60 669.89 1479.00 666.21 1479.50 651.59 1480.00 627.01 1480.50 594.50 1481.00 556.77 1481.50 516.92 1482.00 478.26 1482.50 444.00 1483.00 416.96 1483.50 399.39 1484.00 392.74 1484.04 392.71 1484.50 397.57 1485.00 413.47 1485.50 439.12 1486.00 472.41 1486.50 510.57 1487.00 550.45 1487.50 588.74 1488.00 622.28 1488.50 648.28 1489.00 664.60 1489.48 669.89 1489.50 669.88 1490.00 663.69 1490.50 646.54 1491.00 619.84 1491.50 585.81 1492.00 547.27 1492.50 507.41 1493.00 469.52 1493.50 436.75 1494.00 411.81 1494.50 396.76 1494.92 392.71 1495.00 392.85 1495.50 400.41 1496.00 418.80 1496.50 446.51 1497.00 481.23 1497.50 520.11 1498.00 559.91 1498.50 597.34 1499.00 629.30 1499.50 653.15 1500.00 666.91 1500.36 669.89 1500.50 669.44 1501.00 660.53 1501.50 640.93 1502.00 612.24 1502.50 576.86 1503.00 537.70 1503.50 498.01 1504.00 461.08 1504.50 429.96 1505.00 407.24 1505.50 394.78 1505.80 392.71 1506.00 393.63 1506.50 403.88 1507.00 424.68 1507.50 454.30 1508.00 490.30 1508.50 529.70 1509.00 569.23 1509.50 605.62 1510.00 635.85 1510.50 657.43 1511.00 668.56 1511.24 669.89 1511.50 668.33 1512.00 656.76 1512.50 634.79 1513.00 604.26 1513.50 567.69 1514.00 528.10 1514.50 488.78 1515.00 452.98 1515.50 423.66 1516.00 403.26 1516.50 393.46 1516.68 392.71 1517.00 395.07 1517.50 407.96 1518.00 431.06 1518.50 462.47 1519.00 499.57 1519.50 539.30 1520.00 578.37 1520.50 613.54 1521.00 641.90 1521.50 661.10 1522.00 669.56 1522.12 669.89 1522.50 666.57 1523.00 652.38 1523.50 628.16 1524.00 595.93 1524.50 558.34 1525.00 518.51 1525.50 479.75 1526.00 445.25 1526.50 417.87 1527.00 399.89 1527.50 392.79 1527.56 392.71 1528.00 397.16 1528.50 412.63 1529.00 437.93 1529.50 470.96 1530.00 508.99 1530.50 548.86 1531.00 587.28 1531.50 621.07 1532.00 647.42 1532.50 664.16 1533.00 669.89 1533.50 664.16 1534.00 647.42 1534.50 621.07 1535.00 587.28 1535.50 548.86 1536.00 508.99 1536.50 470.96 1537.00 437.93 1537.50 412.63 1538.00 397.16 1538.44 392.71 1538.50 392.79 1539.00 399.89 1539.50 417.87 1540.00 445.25 1540.50 479.75 1541.00 518.51 1541.50 558.34 1542.00 595.93 1542.50 628.16 1543.00 652.38 1543.50 666.57 1543.88 669.89 1544.00 669.56 1544.50 661.10 1545.00 641.90 1545.50 613.54 1546.00 578.37 1546.50 539.30 1547.00 499.57 1547.50 462.47 1548.00 431.06 1548.50 407.96 1549.00 395.07 1549.32 392.71 1549.50 393.46 1550.00 403.26 1550.50 423.66 1551.00 452.98 1551.50 488.78 1552.00 528.10 1552.50 567.69 1553.00 604.26 1553.50 634.79 1554.00 656.76 1554.50 668.33 1554.76 669.89 1555.00 668.56 1555.50 657.43 1556.00 635.85 1556.50 605.62 1557.00 569.23 1557.50 529.70 1558.00 490.30 1558.50 454.30 1559.00 424.68 1559.50 403.88 1560.00 393.63 1560.20 392.71 1560.50 394.78 1561.00 407.24 1561.50 429.96 1562.00 461.08 1562.50 498.01 1563.00 537.70 1563.50 576.86 1564.00 612.24 1564.50 640.93 1565.00 660.53 1565.50 669.44 1565.64 669.89 1566.00 666.91 1566.50 653.15 1567.00 629.30 1567.50 597.34 1568.00 559.91 1568.50 520.11 1569.00 481.23 1569.50 446.51 1570.00 418.80 1570.50 400.41 1571.00 392.85 1571.08 392.71 1571.50 396.76 1572.00 411.81 1572.50 436.75 1573.00 469.52 1573.50 507.41 1574.00 547.27 1574.50 585.81 1575.00 619.84 1575.50 646.54 1576.00 663.69 1576.50 669.88 1576.52 669.89 1577.00 664.60 1577.50 648.28 1578.00 622.28 1578.50 588.74 1579.00 550.45 1579.50 510.57 1580.00 472.41 1580.50 439.12 1581.00 413.47 1581.50 397.57 1581.96 392.71 1582.00 392.74 1582.50 399.39 1583.00 416.96 1583.50 444.00 1584.00 478.26 1584.50 516.92 1585.00 556.77 1585.50 594.50 1586.00 627.01 1586.50 651.59 1587.00 666.21 1587.40 669.89 1587.50 669.66 1588.00 661.66 1588.50 642.86 1589.00 614.82 1589.50 579.87 1590.00 540.90 1590.50 501.13 1591.00 463.86 1591.50 432.17 1592.00 408.70 1592.50 395.37 1592.84 392.71 1593.00 393.30 1593.50 402.65 1594.00 422.66 1594.50 451.66 1595.00 487.26 1595.50 526.50 1596.00 566.14 1596.50 602.89 1597.00 633.72 1597.50 656.07 1598.00 668.08 1598.28 669.89 1598.50 668.78 1599.00 658.08 1599.50 636.89 1600.00 606.96 1600.50 570.76 1601.00 531.30 1601.50 491.84 1602.00 455.64 1602.50 425.71 1603.00 404.52 1603.50 393.82 1603.72 392.71 1604.00 394.52 1604.50 406.53 1605.00 428.88 1605.50 459.71 1606.00 496.46 1606.50 536.10 1607.00 575.34 1607.50 610.94 1608.00 639.94 1608.50 659.95 1609.00 669.30 1609.16 669.89 1609.50 667.23 1610.00 653.90 1610.50 630.43 1611.00 598.74 1611.50 561.47 1612.00 521.70 1612.50 482.73 1613.00 447.78 1613.50 419.74 1614.00 400.94 1614.50 392.94 1614.60 392.71 1615.00 396.39 1615.50 411.01 1616.00 435.59 1616.50 468.10 1617.00 505.83 1617.50 545.68 1618.00 584.34 1618.50 618.60 1619.00 645.64 1619.50 663.21 1620.00 669.86 1620.04 669.89 1620.50 665.03 1621.00 649.13 1621.50 623.48 1622.00 590.19 1622.50 552.03 1623.00 512.15 1623.50 473.86 1624.00 440.32 1624.50 414.32 1625.00 398.00 1625.48 392.71 1625.50 392.72 1626.00 398.91 1626.50 416.06 1627.00 442.76 1627.50 476.79 1628.00 515.33 1628.50 555.19 1629.00 593.08 1629.50 625.85 1630.00 650.79 1630.50 665.84 1630.92 669.89 1631.00 669.75 1631.50 662.19 1632.00 643.80 1632.50 616.09 1633.00 581.37 1633.50 542.49 1634.00 502.69 1634.50 465.26 1635.00 433.30 1635.50 409.45 1636.00 395.69 1636.36 392.71 1636.50 393.16 1637.00 402.07 1637.50 421.67 1638.00 450.36 1638.50 485.74 1639.00 524.90 1639.50 564.59 1640.00 601.52 1640.50 632.64 1641.00 655.36 1641.50 667.82 1641.80 669.89 1642.00 668.97 1642.50 658.72 1643.00 637.92 1643.50 608.30 1644.00 572.30 1644.50 532.90 1645.00 493.37 1645.50 456.98 1646.00 426.75 1646.50 405.17 1647.00 394.04 1647.24 392.71 1647.50 394.27 1648.00 405.84 1648.50 427.81 1649.00 458.34 1649.50 494.91 1650.00 534.50 1650.50 573.82 1651.00 609.62 1651.50 638.94 1652.00 659.34 1652.50 669.14 1652.68 669.89 1653.00 667.53 1653.50 654.64 1654.00 631.54 1654.50 600.13 1655.00 563.03 1655.50 523.30 1656.00 484.23 1656.50 449.06 1657.00 420.70 1657.50 401.50 1658.00 393.04 1658.12 392.71 1658.50 396.03 1659.00 410.22 1659.50 434.44 1660.00 466.67 1660.50 504.26 1661.00 544.09 1661.50 582.85 1662.00 617.35 1662.50 644.73 1663.00 662.71 1663.50 669.81 1663.56 669.89 1664.00 665.44 1664.50 649.97 1665.00 624.67 1665.50 591.64 1666.00 553.61 1666.50 513.74 1667.00 475.32 1667.50 441.53 1668.00 415.18 1668.50 398.44 1669.00 392.71 1669.50 398.44 1670.00 415.18 1670.50 441.53 1671.00 475.32 1671.50 513.74 1672.00 553.61 1672.50 591.64 1673.00 624.67 1673.50 649.97 1674.00 665.44 1674.44 669.89 1674.50 669.81 1675.00 662.71 1675.50 644.73 1676.00 617.35 1676.50 582.85 1677.00 544.09 1677.50 504.26 1678.00 466.67 1678.50 434.44 1679.00 410.22 1679.50 396.03 1679.88 392.71 1680.00 393.04 1680.50 401.50 1681.00 420.70 1681.50 449.06 1682.00 484.23 1682.50 523.30 1683.00 563.03 1683.50 600.13 1684.00 631.54 1684.50 654.64 1685.00 667.53 1685.32 669.89 1685.50 669.14 1686.00 659.34 1686.50 638.94 1687.00 609.62 1687.50 573.82 1688.00 534.50 1688.50 494.91 1689.00 458.34 1689.50 427.81 1690.00 405.84 1690.50 394.27 1690.76 392.71 1691.00 394.04 1691.50 405.17 1692.00 426.75 1692.50 456.98 1693.00 493.37 1693.50 532.90 1694.00 572.30 1694.50 608.30 1695.00 637.92 1695.50 658.72 1696.00 668.97 1696.20 669.89 1696.50 667.82 1697.00 655.36 1697.50 632.64 1698.00 601.52 1698.50 564.59 1699.00 524.90 1699.50 485.74 1700.00 450.36 1700.50 421.67 1701.00 402.07 1701.50 393.16 1701.64 392.71 1702.00 395.69 1702.50 409.45 1703.00 433.30 1703.50 465.26 1704.00 502.69 1704.50 542.49 1705.00 581.37 1705.50 616.09 1706.00 643.80 1706.50 662.19 1707.00 669.75 1707.08 669.89 1707.50 665.84 1708.00 650.79 1708.50 625.85 1709.00 593.08 1709.50 555.19 1710.00 515.33 1710.50 476.79 1711.00 442.76 1711.50 416.06 1712.00 398.91 1712.50 392.72 1712.52 392.71 1713.00 398.00 1713.50 414.32 1714.00 440.32 1714.50 473.86 1715.00 512.15 1715.50 552.03 1716.00 590.19 1716.50 623.48 1717.00 649.13 1717.50 665.03 1717.96 669.89 1718.00 669.86 1718.50 663.21 1719.00 645.64 1719.50 618.60 1720.00 584.34 1720.50 545.68 1721.00 505.83 1721.50 468.10 1722.00 435.59 1722.50 411.01 1723.00 396.39 1723.40 392.71 1723.50 392.94 1724.00 400.94 1724.50 419.74 1725.00 447.78 1725.50 482.73 1726.00 521.70 1726.50 561.47 1727.00 598.74 1727.50 630.43 1728.00 653.90 1728.50 667.23 1728.84 669.89 1729.00 669.30 1729.50 659.95 1730.00 639.94 1730.50 610.94 1731.00 575.34 1731.50 536.10 1732.00 496.46 1732.50 459.71 1733.00 428.88 1733.50 406.53 1734.00 394.52 1734.28 392.71 1734.50 393.82 1735.00 404.52 1735.50 425.71 1736.00 455.64 1736.50 491.84 1737.00 531.30 1737.50 570.76 1738.00 606.96 1738.50 636.89 1739.00 658.08 1739.50 668.78 1739.72 669.89 1740.00 668.08 1740.50 656.07 1741.00 633.72 1741.50 602.89 1742.00 566.14 1742.50 526.50 1743.00 487.26 1743.50 451.66 1744.00 422.66 1744.50 402.65 1745.00 393.30 1745.16 392.71 1745.50 395.37 1746.00 408.70 1746.50 432.17 1747.00 463.86 1747.50 501.13 1748.00 540.90 1748.50 579.87 1749.00 614.82 1749.50 642.86 1750.00 661.66 1750.50 669.66 1750.60 669.89 1751.00 666.21 1751.50 651.59 1752.00 627.01 1752.50 594.50 1753.00 556.77 1753.50 516.92 1754.00 478.26 1754.50 444.00 1755.00 416.96 1755.50 399.39 1756.00 392.74 1756.04 392.71 1756.50 397.57 1757.00 413.47 1757.50 439.12 1758.00 472.41 1758.50 510.57 1759.00 550.45 1759.50 588.74 1760.00 622.28 1760.50 648.28 1761.00 664.60 1761.48 669.89 1761.50 669.88 1762.00 663.69 1762.50 646.54 1763.00 619.84 1763.50 585.81 1764.00 547.27 1764.50 507.41 1765.00 469.52 1765.50 436.75 1766.00 411.81 1766.50 396.76 1766.92 392.71 1767.00 392.85 1767.50 400.41 1768.00 418.80 1768.50 446.51 1769.00 481.23 1769.50 520.11 1770.00 559.91 1770.50 597.34 1771.00 629.30 1771.50 653.15 1772.00 666.91 1772.36 669.89 1772.50 669.44 1773.00 660.53 1773.50 640.93 1774.00 612.24 1774.50 576.86 1775.00 537.70 1775.50 498.01 1776.00 461.08 1776.50 429.96 1777.00 407.24 1777.50 394.78 1777.80 392.71 1778.00 393.63 1778.50 403.88 1779.00 424.68 1779.50 454.30 1780.00 490.30 1780.50 529.70 1781.00 569.23 1781.50 605.62 1782.00 635.85 1782.50 657.43 1783.00 668.56 1783.24 669.89 1783.50 668.33 1784.00 656.76 1784.50 634.79 1785.00 604.26 1785.50 567.69 1786.00 528.10 1786.50 488.78 1787.00 452.98 1787.50 423.66 1788.00 403.26 1788.50 393.46 1788.68 392.71 1789.00 395.07 1789.50 407.96 1790.00 431.06 1790.50 462.47 1791.00 499.57 1791.50 539.30 1792.00 578.37 1792.50 613.54 1793.00 641.90 1793.50 661.10 1794.00 669.56 1794.12 669.89 1794.50 666.57 1795.00 652.38 1795.50 628.16 1796.00 595.93 1796.50 558.34 1797.00 518.51 1797.50 479.75 1798.00 445.25 1798.50 417.87 1799.00 399.89 1799.50 392.79 1799.56 392.71 1800.00 397.16 1800.50 412.63 1801.00 437.93 1801.50 470.96 1802.00 508.99 1802.50 548.86 1803.00 587.28 1803.50 621.07 1804.00 647.42 1804.50 664.16 1805.00 669.89 1805.50 664.16 1806.00 647.42 1806.50 621.07 1807.00 587.28 1807.50 548.86 1808.00 508.99 1808.50 470.96 1809.00 437.93 1809.50 412.63 1810.00 397.16 1810.44 392.71 1810.50 392.79 1811.00 399.89 1811.50 417.87 1812.00 445.25 1812.50 479.75 1813.00 518.51 1813.50 558.34 1814.00 595.93 1814.50 628.16 1815.00 652.38 1815.50 666.57 1815.88 669.89 1816.00 669.56 1816.50 661.10 1817.00 641.90 1817.50 613.54 1818.00 578.37 1818.50 539.30 1819.00 499.57 1819.50 462.47 1820.00 431.06 1820.50 407.96 1821.00 395.07 1821.32 392.71 1821.50 393.46 1822.00 403.26 1822.50 423.66 1823.00 452.98 1823.50 488.78 1824.00 528.10 1824.50 567.69 1825.00 604.26 1825.50 634.79 1826.00 656.76 1826.50 668.33 1826.76 669.89 1827.00 668.56 1827.50 657.43 1828.00 635.85 1828.50 605.62 1829.00 569.23 1829.50 529.70 1830.00 490.30 1830.50 454.30 1831.00 424.68 1831.50 403.88 1832.00 393.63 1832.20 392.71 1832.50 394.78 1833.00 407.24 1833.50 429.96 1834.00 461.08 1834.50 498.01 1835.00 537.70 1835.50 576.86 1836.00 612.24 1836.50 640.93 1837.00 660.53 1837.50 669.44 1837.64 669.89 1838.00 666.91 1838.50 653.15 1839.00 629.30 1839.50 597.34 1840.00 559.91 1840.50 520.11 1841.00 481.23 1841.50 446.51 1842.00 418.80 1842.50 400.41 1843.00 392.85 1843.08 392.71 1843.50 396.76 1844.00 411.81 1844.50 436.75 1845.00 469.52 1845.50 507.41 1846.00 547.27 1846.50 585.81 1847.00 619.84 1847.50 646.54 1848.00 663.69 1848.50 669.88 1848.52 669.89 1849.00 664.60 1849.50 648.28 1850.00 622.28 1850.50 588.74 1851.00 550.45 1851.50 510.57 1852.00 472.41 1852.50 439.12 1853.00 413.47 1853.50 397.57 1853.96 392.71 1854.00 392.74 1854.50 399.39 1855.00 416.96 1855.50 444.00 1856.00 478.26 1856.50 516.92 1857.00 556.77 1857.50 594.50 1858.00 627.01 1858.50 651.59 1859.00 666.21 1859.40 669.89 1859.50 669.66 1860.00 661.66 1860.50 642.86 1861.00 614.82 1861.50 579.87 1862.00 540.90 1862.50 501.13 1863.00 463.86 1863.50 432.17 1864.00 408.70 1864.50 395.37 1864.84 392.71 1865.00 393.30 1865.50 402.65 1866.00 422.66 1866.50 451.66 1867.00 487.26 1867.50 526.50 1868.00 566.14 1868.50 602.89 1869.00 633.72 1869.50 656.07 1870.00 668.08 1870.28 669.89 1870.50 668.78 1871.00 658.08 1871.50 636.89 1872.00 606.96 1872.50 570.76 1873.00 531.30" fill="none" stroke="#ff0000" stroke-width="1.0"/>
<path d="M1329 531.5H1873" stroke="#000" stroke-width="1.5"/>
<path d="M1329 836.5H1873" stroke="#000" stroke-width="1.2"/>
<text x="1329.5" y="854" text-anchor="middle" font-family="Liberation Sans" font-size="10" fill="#222">0.0</text>
<path d="M1438.5 831V842" stroke="#000" stroke-width="1.3"/>
<text x="1438.5" y="854" text-anchor="middle" font-family="Liberation Sans" font-size="10" fill="#222">0.2</text>
<path d="M1547.5 831V842" stroke="#000" stroke-width="1.3"/>
<text x="1547.5" y="854" text-anchor="middle" font-family="Liberation Sans" font-size="10" fill="#222">0.4</text>
<path d="M1655.5 831V842" stroke="#000" stroke-width="1.3"/>
<text x="1655.5" y="854" text-anchor="middle" font-family="Liberation Sans" font-size="10" fill="#222">0.6</text>
<path d="M1764.5 831V842" stroke="#000" stroke-width="1.3"/>
<text x="1764.5" y="854" text-anchor="middle" font-family="Liberation Sans" font-size="10" fill="#222">0.8</text>
<text x="1873.5" y="854" text-anchor="middle" font-family="Liberation Sans" font-size="10" fill="#222">1.0</text>
<text x="1875" y="839" font-family="Liberation Sans" font-weight="bold" font-size="10" fill="#000">t/s</text>
<rect x="1328" y="225" width="2" height="641" fill="#ffb400"/>
<rect x="1872" y="225" width="2" height="641" fill="#1ec0f0"/>
<rect x="1329" y="896" width="544" height="24.5" fill="#fff"/>
<path d="M1329 908.5H1873" stroke="#000" stroke-width="1.2"/>
<path d="M1329 920.5H1873" stroke="#000" stroke-width="1.2"/>
<text x="1329.5" y="935" text-anchor="middle" font-family="Liberation Sans" font-size="8" fill="#222">0.0</text>
<path d="M1438.5 896V903M1438.5 914V925" stroke="#000" stroke-width="1.3"/>
<path d="M1438.5 903V914" stroke="#687a8e" stroke-width="1" stroke-dasharray="3 3"/>
<text x="1438.5" y="935" text-anchor="middle" font-family="Liberation Sans" font-size="8" fill="#222">0.2</text>
<path d="M1547.5 896V903M1547.5 914V925" stroke="#000" stroke-width="1.3"/>
<path d="M1547.5 903V914" stroke="#687a8e" stroke-width="1" stroke-dasharray="3 3"/>
<text x="1547.5" y="935" text-anchor="middle" font-family="Liberation Sans" font-size="8" fill="#222">0.4</text>
<path d="M1655.5 896V903M1655.5 914V925" stroke="#000" stroke-width="1.3"/>
<path d="M1655.5 903V914" stroke="#687a8e" stroke-width="1" stroke-dasharray="3 3"/>
<text x="1655.5" y="935" text-anchor="middle" font-family="Liberation Sans" font-size="8" fill="#222">0.6</text>
<path d="M1764.5 896V903M1764.5 914V925" stroke="#000" stroke-width="1.3"/>
<path d="M1764.5 903V914" stroke="#687a8e" stroke-width="1" stroke-dasharray="3 3"/>
<text x="1764.5" y="935" text-anchor="middle" font-family="Liberation Sans" font-size="8" fill="#222">0.8</text>
<text x="1873.5" y="935" text-anchor="middle" font-family="Liberation Sans" font-size="8" fill="#222">1.0</text>
<text x="1875" y="923" font-family="Liberation Sans" font-weight="bold" font-size="10" fill="#000">t/s</text>
<text x="1326" y="911" text-anchor="end" font-family="Liberation Sans" font-weight="bold" font-size="10" fill="#111">Trip</text>
<rect x="1328" y="896" width="2" height="48" fill="#ffb400"/>
<rect x="1872" y="896" width="2" height="48" fill="#1ec0f0"/>
<text transform="translate(1291 531) rotate(-90)" text-anchor="middle" font-family="Liberation Sans" font-weight="bold" font-size="12" fill="#111">Current GroupA (A)</text>
</svg>
<div class="t" style="left:23.00px;top:6px;font-size:12px;color:#000;font-family:'Liberation Sans',sans-serif;transform:scaleX(0.9683);transform-origin:0 0">AMT Sequencer - AMT Sequencer</div>
<div class="t" style="left:14.26px;top:29px;font-size:12.5px;color:#1e2b48;font-family:'Liberation Sans',sans-serif;font-weight:bold;transform:scaleX(0.9236);transform-origin:0 0">File</div>
<div class="t" style="left:53.15px;top:29px;font-size:12.5px;color:#1e2b48;font-family:'Liberation Sans',sans-serif;font-weight:bold;transform:scaleX(0.9786);transform-origin:0 0">View</div>
<div class="t" style="left:100.41px;top:29px;font-size:12.5px;color:#1e2b48;font-family:'Liberation Sans',sans-serif;font-weight:bold;transform:scaleX(0.8980);transform-origin:0 0">Test</div>
<div class="t" style="left:141.74px;top:29px;font-size:12.5px;color:#1e2b48;font-family:'Liberation Sans',sans-serif;font-weight:bold;transform:scaleX(0.9483);transform-origin:0 0">Parameters</div>
<div class="t" style="left:224.72px;top:29px;font-size:12.5px;color:#1e2b48;font-family:'Liberation Sans',sans-serif;font-weight:bold;transform:scaleX(0.9695);transform-origin:0 0">Hardware</div>
<div class="t" style="left:299.25px;top:29px;font-size:12.5px;color:#1e2b48;font-family:'Liberation Sans',sans-serif;font-weight:bold;transform:scaleX(0.9571);transform-origin:0 0">Window</div>
<div class="t" style="left:363.47px;top:29px;font-size:12.5px;color:#1e2b48;font-family:'Liberation Sans',sans-serif;font-weight:bold;transform:scaleX(0.9787);transform-origin:0 0">Help</div>
<div class="t" style="left:408.38px;top:29px;font-size:12.5px;color:#1e2b48;font-family:'Liberation Sans',sans-serif;font-weight:bold;transform:scaleX(0.9240);transform-origin:0 0">Socket Status: OK</div>
<div class="t" style="left:1621.88px;top:27px;font-size:12px;color:#1e2b48;font-family:'Liberation Sans',sans-serif;transform:scaleX(0.8824);transform-origin:0 0">(M: 26.30) | (AS: 14)</div>
<div class="t" style="left:1909.40px;top:24px;font-size:12px;color:#000;font-family:'Liberation Sans',sans-serif;font-weight:bold">?</div>
<div class="t" style="left:784.44px;top:56px;font-size:12px;color:#13203c;font-family:'Liberation Sans',sans-serif;font-weight:bold;transform:scaleX(0.9517);transform-origin:0 0">Ready To Connect</div>
<div class="t" style="left:466.61px;top:91px;font-size:11px;color:#fff;font-family:'Liberation Sans',sans-serif;font-weight:bold;transform:scaleX(0.9525);transform-origin:0 0">ALL State</div>
<div class="t" style="left:526.90px;top:91px;font-size:11px;color:#6a6a6a;font-family:'Liberation Sans',sans-serif;font-weight:bold;transform:scaleX(1.0101);transform-origin:0 0">Current State</div>
<div class="t" style="left:83.67px;top:89px;font-size:12px;color:#000;font-family:'Liberation Sans',sans-serif;transform:scaleX(1.0329);transform-origin:0 0">1/1</div>
<div class="t" style="left:43.92px;top:129px;font-size:12px;color:#fff;font-family:'Liberation Sans',sans-serif;transform:scaleX(0.9339);transform-origin:0 0">Table View</div>
<div class="t" style="left:95.46px;top:156px;font-size:13px;color:#fffbe8;font-family:'Liberation Sans',sans-serif;font-weight:bold;transform:scaleX(1.0987);transform-origin:0 0">S1</div>
<div class="t" style="left:276.95px;top:149px;font-size:12px;color:#fff;font-family:'Liberation Sans',sans-serif;transform:scaleX(0.8455);transform-origin:0 0">Normal</div>
<div class="t" style="left:238.37px;top:162px;font-size:12px;color:#fff;font-family:'Liberation Sans',sans-serif;transform:scaleX(0.8752);transform-origin:0 0">General: Direct</div>
<div class="t" style="left:12.12px;top:183px;font-size:12px;color:#000;font-family:'Liberation Sans',sans-serif;font-weight:bold;transform:scaleX(0.9794);transform-origin:0 0">Name</div>
<div class="t" style="left:72.87px;top:181px;font-size:12px;color:#000;font-family:'Liberation Sans',sans-serif;transform:scaleX(0.8676);transform-origin:0 0">State 1</div>
<div class="t" style="left:12.05px;top:201px;font-size:12px;color:#000;font-family:'Liberation Sans',sans-serif;font-weight:bold;transform:scaleX(1.0588);transform-origin:0 0">I L1: I L1</div>
<div class="t" style="left:12.05px;top:216px;font-size:12px;color:#000;font-family:'Liberation Sans',sans-serif;font-weight:bold;transform:scaleX(1.0633);transform-origin:0 0">I L2: I L2</div>
<div class="t" style="left:12.05px;top:231px;font-size:12px;color:#000;font-family:'Liberation Sans',sans-serif;font-weight:bold;transform:scaleX(1.0633);transform-origin:0 0">I L3: I L3</div>
<div class="t" style="left:110.88px;top:202px;font-size:12px;color:#000;font-family:'Liberation Sans',sans-serif;transform:scaleX(0.9095);transform-origin:0 0">1.000 A</div>
<div class="t" style="left:201.64px;top:202px;font-size:12px;color:#000;font-family:'Liberation Sans',sans-serif;transform:scaleX(0.9208);transform-origin:0 0">0.00 °</div>
<div class="t" style="left:267.65px;top:202px;font-size:12px;color:#000;font-family:'Liberation Sans',sans-serif;transform:scaleX(0.9019);transform-origin:0 0">50.00 Hz</div>
<div class="t" style="left:110.88px;top:217px;font-size:12px;color:#000;font-family:'Liberation Sans',sans-serif;transform:scaleX(0.9095);transform-origin:0 0">1.500 A</div>
<div class="t" style="left:186.45px;top:217px;font-size:12px;color:#000;font-family:'Liberation Sans',sans-serif;transform:scaleX(0.9055);transform-origin:0 0">-120.00 °</div>
<div class="t" style="left:267.65px;top:217px;font-size:12px;color:#000;font-family:'Liberation Sans',sans-serif;transform:scaleX(0.9019);transform-origin:0 0">50.00 Hz</div>
<div class="t" style="left:111.16px;top:232px;font-size:12px;color:#000;font-family:'Liberation Sans',sans-serif;transform:scaleX(0.9027);transform-origin:0 0">2.000 A</div>
<div class="t" style="left:189.88px;top:232px;font-size:12px;color:#000;font-family:'Liberation Sans',sans-serif;transform:scaleX(0.9097);transform-origin:0 0">120.00 °</div>
<div class="t" style="left:267.65px;top:232px;font-size:12px;color:#000;font-family:'Liberation Sans',sans-serif;transform:scaleX(0.9019);transform-origin:0 0">50.00 Hz</div>
<div class="t" style="left:81.97px;top:249px;font-size:12px;color:#000;font-family:'Liberation Sans',sans-serif;transform:scaleX(0.8842);transform-origin:0 0">Output</div>
<div class="t" style="left:162.40px;top:249px;font-size:12px;color:#000;font-family:'Liberation Sans',sans-serif;transform:scaleX(0.8998);transform-origin:0 0">Display Na...</div>
<div class="t" style="left:242.33px;top:249px;font-size:12px;color:#000;font-family:'Liberation Sans',sans-serif;transform:scaleX(0.8665);transform-origin:0 0">First State</div>
<div class="t" style="left:12.13px;top:265px;font-size:12px;color:#000;font-family:'Liberation Sans',sans-serif;font-weight:bold;transform:scaleX(0.9563);transform-origin:0 0">Bin. Out</div>
<div class="t" style="left:13.30px;top:302px;font-size:12px;color:#000;font-family:'Liberation Sans',sans-serif;font-weight:bold;transform:scaleX(0.9653);transform-origin:0 0">Trigger</div>
<div class="t" style="left:275.91px;top:302px;font-size:12px;color:#000;font-family:'Liberation Sans',sans-serif;transform:scaleX(0.8793);transform-origin:0 0">1.000 s</div>
<div class="t" style="left:13.30px;top:321px;font-size:12px;color:#000;font-family:'Liberation Sans',sans-serif;font-weight:bold">Type</div>
<div class="t" style="left:74.74px;top:322px;font-size:12px;color:#000;font-family:'Liberation Sans',sans-serif;transform:scaleX(0.8618);transform-origin:0 0">Normal</div>
<div class="t" style="left:11.24px;top:351px;font-size:12px;color:#000;font-family:'Liberation Sans',sans-serif;font-weight:bold;transform:scaleX(0.9177);transform-origin:0 0">Comment</div>
<div class="t" style="left:28.22px;top:380px;font-size:8.5px;color:#222;font-family:'Liberation Sans',sans-serif;transform:scaleX(0.9125);transform-origin:0 0">Trigger</div>
<div class="t" style="left:28.04px;top:388px;font-size:8.5px;color:#222;font-family:'Liberation Sans',sans-serif;transform:scaleX(0.9086);transform-origin:0 0">Condition</div>
<div class="t" style="left:78.63px;top:381px;font-size:10px;color:#222;font-family:'Liberation Sans',sans-serif;transform:scaleX(0.9407);transform-origin:0 0">C1</div>
<div class="t" style="left:93.12px;top:395px;font-size:10px;color:#222;font-family:'Liberation Sans',sans-serif;transform:scaleX(0.8957);transform-origin:0 0">Trip</div>
<div class="t" style="left:12.12px;top:442px;font-size:12px;color:#000;font-family:'Liberation Sans',sans-serif;font-weight:bold;transform:scaleX(0.9798);transform-origin:0 0">Bin. Input</div>
<div class="t" style="left:1220.40px;top:147px;font-size:12px;color:#000;font-family:'Liberation Sans',sans-serif;font-weight:bold">?</div>
<div class="t" style="left:36.90px;top:585px;font-size:12px;color:#111;font-family:'Liberation Sans',sans-serif;transform:scaleX(0.9703);transform-origin:0 0">Vector View First | Mode: ...</div>
<div class="t" style="left:17.22px;top:612px;font-size:12px;color:#222;font-family:'Liberation Sans',sans-serif;transform:scaleX(0.9283);transform-origin:0 0">Type:</div>
<div class="t" style="left:57.44px;top:612px;font-size:12px;color:#000;font-family:'Liberation Sans',sans-serif;transform:scaleX(0.8618);transform-origin:0 0">Normal</div>
<div class="t" style="left:150.55px;top:612px;font-size:12px;color:#000;font-family:'Liberation Sans',sans-serif;transform:scaleX(0.8935);transform-origin:0 0">0.000 s</div>
<div class="t" style="left:225.66px;top:611px;font-size:12px;color:#000;font-family:'Liberation Sans',sans-serif;transform:scaleX(0.8733);transform-origin:0 0">Show VLL from zero</div>
<div class="t" style="left:18.76px;top:636px;font-size:12px;color:#000;font-family:'Liberation Sans',sans-serif;transform:scaleX(0.8754);transform-origin:0 0">Signal</div>
<div class="t" style="left:77.30px;top:636px;font-size:12px;color:#000;font-family:'Liberation Sans',sans-serif;transform:scaleX(0.8956);transform-origin:0 0">Magnitude</div>
<div class="t" style="left:144.32px;top:636px;font-size:12px;color:#000;font-family:'Liberation Sans',sans-serif;transform:scaleX(0.8779);transform-origin:0 0">Harmonic 1</div>
<div class="t" style="left:215.21px;top:636px;font-size:12px;color:#000;font-family:'Liberation Sans',sans-serif;transform:scaleX(0.8865);transform-origin:0 0">Phase</div>
<div class="t" style="left:266.38px;top:636px;font-size:12px;color:#000;font-family:'Liberation Sans',sans-serif;transform:scaleX(0.9170);transform-origin:0 0">Real</div>
<div class="t" style="left:322.27px;top:636px;font-size:12px;color:#000;font-family:'Liberation Sans',sans-serif;transform:scaleX(0.8488);transform-origin:0 0">Imaginary</div>
<div class="t" style="left:384.66px;top:636px;font-size:12px;color:#000;font-family:'Liberation Sans',sans-serif;transform:scaleX(0.8774);transform-origin:0 0">Show Arrow</div>
<div class="t" style="left:457.98px;top:636px;font-size:12px;color:#000;font-family:'Liberation Sans',sans-serif;transform:scaleX(0.8674);transform-origin:0 0">Color</div>
<div class="t" style="left:12.15px;top:654px;font-size:12px;color:#000;font-family:'Liberation Sans',sans-serif;font-weight:bold;transform:scaleX(1.0609);transform-origin:0 0">I L1: I L1</div>
<div class="t" style="left:93.88px;top:654px;font-size:12px;color:#000;font-family:'Liberation Sans',sans-serif;transform:scaleX(0.9121);transform-origin:0 0">1.000 A</div>
<div class="t" style="left:164.85px;top:654px;font-size:12px;color:#000;font-family:'Liberation Sans',sans-serif;transform:scaleX(0.9055);transform-origin:0 0">0.000 A</div>
<div class="t" style="left:224.75px;top:654px;font-size:12px;color:#000;font-family:'Liberation Sans',sans-serif;transform:scaleX(0.9076);transform-origin:0 0">0.00 °</div>
<div class="t" style="left:271.99px;top:654px;font-size:12px;color:#000;font-family:'Liberation Sans',sans-serif;transform:scaleX(0.8995);transform-origin:0 0">1.000 A</div>
<div class="t" style="left:333.54px;top:654px;font-size:12px;color:#000;font-family:'Liberation Sans',sans-serif;transform:scaleX(0.9154);transform-origin:0 0">0.000 A</div>
<div class="t" style="left:380.14px;top:654px;font-size:12px;color:#000;font-family:'Liberation Sans',sans-serif;transform:scaleX(0.8766);transform-origin:0 0">True</div>
<div class="t" style="left:12.15px;top:669px;font-size:12px;color:#000;font-family:'Liberation Sans',sans-serif;font-weight:bold;transform:scaleX(1.0654);transform-origin:0 0">I L2: I L2</div>
<div class="t" style="left:93.88px;top:669px;font-size:12px;color:#000;font-family:'Liberation Sans',sans-serif;transform:scaleX(0.9121);transform-origin:0 0">1.500 A</div>
<div class="t" style="left:164.85px;top:669px;font-size:12px;color:#000;font-family:'Liberation Sans',sans-serif;transform:scaleX(0.9055);transform-origin:0 0">0.000 A</div>
<div class="t" style="left:209.85px;top:669px;font-size:12px;color:#000;font-family:'Liberation Sans',sans-serif;transform:scaleX(0.8908);transform-origin:0 0">-120.00 °</div>
<div class="t" style="left:260.36px;top:669px;font-size:12px;color:#000;font-family:'Liberation Sans',sans-serif;transform:scaleX(0.8707);transform-origin:0 0">-750.0 mA</div>
<div class="t" style="left:330.55px;top:669px;font-size:12px;color:#000;font-family:'Liberation Sans',sans-serif;transform:scaleX(0.9005);transform-origin:0 0">-1.299 A</div>
<div class="t" style="left:380.14px;top:669px;font-size:12px;color:#000;font-family:'Liberation Sans',sans-serif;transform:scaleX(0.8766);transform-origin:0 0">True</div>
<div class="t" style="left:12.15px;top:684px;font-size:12px;color:#000;font-family:'Liberation Sans',sans-serif;font-weight:bold;transform:scaleX(1.0654);transform-origin:0 0">I L3: I L3</div>
<div class="t" style="left:94.16px;top:684px;font-size:12px;color:#000;font-family:'Liberation Sans',sans-serif;transform:scaleX(0.9052);transform-origin:0 0">2.000 A</div>
<div class="t" style="left:164.85px;top:684px;font-size:12px;color:#000;font-family:'Liberation Sans',sans-serif;transform:scaleX(0.9055);transform-origin:0 0">0.000 A</div>
<div class="t" style="left:212.89px;top:684px;font-size:12px;color:#000;font-family:'Liberation Sans',sans-serif;transform:scaleX(0.9028);transform-origin:0 0">120.00 °</div>
<div class="t" style="left:268.55px;top:684px;font-size:12px;color:#000;font-family:'Liberation Sans',sans-serif;transform:scaleX(0.8959);transform-origin:0 0">-1.000 A</div>
<div class="t" style="left:333.58px;top:684px;font-size:12px;color:#000;font-family:'Liberation Sans',sans-serif;transform:scaleX(0.9146);transform-origin:0 0">1.732 A</div>
<div class="t" style="left:380.14px;top:684px;font-size:12px;color:#000;font-family:'Liberation Sans',sans-serif;transform:scaleX(0.8766);transform-origin:0 0">True</div>
<div class="t" style="left:1203.65px;top:1013px;font-size:12px;color:#000;font-family:'Liberation Sans',sans-serif;transform:scaleX(0.9127);transform-origin:0 0">2.000 A</div>
<div class="t" style="left:1257.82px;top:131px;font-size:12px;color:#fff;font-family:'Liberation Sans',sans-serif;transform:scaleX(0.9597);transform-origin:0 0">Signal View</div>
<div class="t" style="left:1263.97px;top:153px;font-size:12px;color:#000;font-family:'Liberation Sans',sans-serif;transform:scaleX(0.8694);transform-origin:0 0">Signal View</div>
<div class="t" style="left:1352.86px;top:155px;font-size:12px;color:#000;font-family:'Liberation Sans',sans-serif;transform:scaleX(0.8781);transform-origin:0 0">Setting</div>
<div class="t" style="left:1797.43px;top:154px;font-size:12px;color:#000;font-family:'Liberation Sans',sans-serif;transform:scaleX(0.8675);transform-origin:0 0">Export Comtrade ...</div>
<div class="t" style="left:1887.40px;top:148px;font-size:12px;color:#000;font-family:'Liberation Sans',sans-serif;font-weight:bold">?</div>
<div class="t" style="left:1382.54px;top:207px;font-size:10px;color:#000;font-family:'Liberation Sans',sans-serif;transform:scaleX(1.0638);transform-origin:0 0">I L1: I L1</div>
<div class="t" style="left:1506.53px;top:207px;font-size:10px;color:#000;font-family:'Liberation Sans',sans-serif;transform:scaleX(1.0771);transform-origin:0 0">I L2: I L2</div>
<div class="t" style="left:1631.53px;top:207px;font-size:10px;color:#000;font-family:'Liberation Sans',sans-serif;transform:scaleX(1.0771);transform-origin:0 0">I L3: I L3</div>
<div class="t" style="left:5.45px;top:1056px;font-size:12px;color:#111;font-family:'Liberation Sans',sans-serif;transform:scaleX(0.9509);transform-origin:0 0">IA1</div>
<div class="t" style="left:33.53px;top:1056px;font-size:12px;color:#111;font-family:'Liberation Sans',sans-serif;transform:scaleX(0.9693);transform-origin:0 0">IA2</div>
<div class="t" style="left:61.44px;top:1056px;font-size:12px;color:#111;font-family:'Liberation Sans',sans-serif;transform:scaleX(0.9634);transform-origin:0 0">IA3</div>
<div class="t" style="left:101.63px;top:1050px;font-size:10.5px;color:#111;font-family:'Liberation Sans',sans-serif;font-weight:bold;transform:scaleX(0.9180);transform-origin:0 0">C1</div>
<div class="t" style="left:1364.51px;top:1056px;font-size:12px;color:#10182a;font-family:'Liberation Mono',monospace;transform:scaleX(0.9815);transform-origin:0 0">St. Cond.: Immed.</div>
<div class="t" style="left:1495.91px;top:1056px;font-size:12px;color:#10182a;font-family:'Liberation Mono',monospace;transform:scaleX(0.9848);transform-origin:0 0">CT: Dir. line</div>
<div class="t" style="left:1606.53px;top:1056px;font-size:12.5px;color:#10182a;font-family:'Liberation Sans',sans-serif;transform:scaleX(0.9697);transform-origin:0 0">Running Room :  None</div>
<div class="t" style="left:1866.60px;top:1057px;font-size:12px;color:#10182a;font-family:'Liberation Sans',sans-serif;transform:scaleX(0.9880);transform-origin:0 0">AMT</div>
</body></html>
